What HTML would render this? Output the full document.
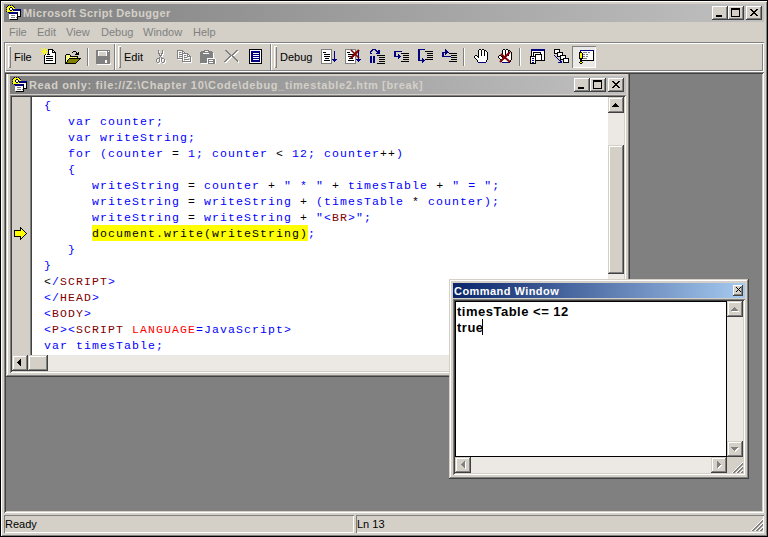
<!DOCTYPE html><html><head><meta charset="utf-8"><style>html,body{margin:0;padding:0;}body{width:768px;height:537px;position:relative;overflow:hidden;background:#000;font-family:"Liberation Sans",sans-serif;}svg{display:block}.mono{font-family:"Liberation Mono",monospace;font-size:11.5px;letter-spacing:1.1px;line-height:16px;}</style></head><body><div style="position:absolute;left:1px;top:1px;width:766px;height:535px;background:#d4d0c8;box-shadow: inset 1px 1px 0 #fff, inset -1px -1px 0 #808080;"></div><div style="position:absolute;left:4px;top:4px;width:760px;height:18px;background:linear-gradient(to right,#808080,#c0c0c0);"></div><svg style="position:absolute;left:5px;top:5px" width="16" height="16" shape-rendering="crispEdges"><rect x="3" y="0" width="1" height="1" fill="#000000"/><rect x="5" y="0" width="1" height="1" fill="#000000"/><rect x="7" y="0" width="1" height="1" fill="#000000"/><rect x="2" y="1" width="1" height="1" fill="#000000"/><rect x="3" y="1" width="5" height="1" fill="#ffff00"/><rect x="8" y="1" width="1" height="1" fill="#000000"/><rect x="1" y="2" width="1" height="1" fill="#000000"/><rect x="2" y="2" width="3" height="1" fill="#ffff00"/><rect x="5" y="2" width="2" height="1" fill="#000000"/><rect x="7" y="2" width="2" height="1" fill="#ffff00"/><rect x="9" y="2" width="1" height="1" fill="#000000"/><rect x="2" y="3" width="2" height="1" fill="#ffff00"/><rect x="4" y="3" width="1" height="1" fill="#000000"/><rect x="5" y="3" width="2" height="1" fill="#ffffff"/><rect x="7" y="3" width="1" height="1" fill="#000000"/><rect x="8" y="3" width="2" height="1" fill="#ffff00"/><rect x="1" y="4" width="1" height="1" fill="#000000"/><rect x="2" y="4" width="2" height="1" fill="#ffff00"/><rect x="4" y="4" width="1" height="1" fill="#000000"/><rect x="5" y="4" width="2" height="1" fill="#ffffff"/><rect x="7" y="4" width="1" height="1" fill="#000000"/><rect x="8" y="4" width="8" height="1" fill="#000080"/><rect x="2" y="5" width="3" height="1" fill="#ffff00"/><rect x="5" y="5" width="2" height="1" fill="#000000"/><rect x="7" y="5" width="1" height="1" fill="#ffff00"/><rect x="8" y="5" width="7" height="1" fill="#000080"/><rect x="15" y="5" width="1" height="1" fill="#000000"/><rect x="1" y="6" width="1" height="1" fill="#000000"/><rect x="2" y="6" width="6" height="1" fill="#ffff00"/><rect x="8" y="6" width="7" height="1" fill="#ffffff"/><rect x="15" y="6" width="1" height="1" fill="#000000"/><rect x="3" y="7" width="1" height="1" fill="#000000"/><rect x="4" y="7" width="8" height="1" fill="#000080"/><rect x="12" y="7" width="1" height="1" fill="#000000"/><rect x="13" y="7" width="2" height="1" fill="#ffffff"/><rect x="15" y="7" width="1" height="1" fill="#000000"/><rect x="4" y="8" width="8" height="1" fill="#000080"/><rect x="12" y="8" width="1" height="1" fill="#000000"/><rect x="13" y="8" width="2" height="1" fill="#ffffff"/><rect x="15" y="8" width="1" height="1" fill="#000000"/><rect x="4" y="9" width="8" height="1" fill="#ffffff"/><rect x="12" y="9" width="1" height="1" fill="#000000"/><rect x="13" y="9" width="2" height="1" fill="#ffffff"/><rect x="15" y="9" width="1" height="1" fill="#000000"/><rect x="4" y="10" width="2" height="1" fill="#ffffff"/><rect x="6" y="10" width="4" height="1" fill="#808080"/><rect x="10" y="10" width="2" height="1" fill="#ffffff"/><rect x="12" y="10" width="1" height="1" fill="#000000"/><rect x="13" y="10" width="2" height="1" fill="#ffffff"/><rect x="15" y="10" width="1" height="1" fill="#000000"/><rect x="4" y="11" width="8" height="1" fill="#ffffff"/><rect x="12" y="11" width="4" height="1" fill="#000000"/><rect x="4" y="12" width="2" height="1" fill="#ffffff"/><rect x="6" y="12" width="4" height="1" fill="#808080"/><rect x="10" y="12" width="1" height="1" fill="#ffffff"/><rect x="11" y="12" width="1" height="1" fill="#808080"/><rect x="12" y="12" width="1" height="1" fill="#000000"/><rect x="4" y="13" width="8" height="1" fill="#ffffff"/><rect x="12" y="13" width="1" height="1" fill="#000000"/><rect x="5" y="14" width="8" height="1" fill="#000000"/></svg><div style="position:absolute;left:23px;top:4px;white-space:pre;font-weight:bold;font-size:11px;line-height:18px;color:#d4d0c8;letter-spacing:0.38px;">Microsoft Script Debugger</div><div style="position:absolute;left:712px;top:6px;width:16px;height:14px;background:#d4d0c8;box-shadow: inset -1px -1px 0 #404040, inset 1px 1px 0 #ffffff, inset -2px -2px 0 #808080, inset 2px 2px 0 #d4d0c8;"></div><svg style="position:absolute;left:712px;top:6px" width="16" height="11" shape-rendering="crispEdges"><rect x="4" y="9" width="6" height="1" fill="#000000"/><rect x="4" y="10" width="6" height="1" fill="#000000"/></svg><div style="position:absolute;left:728px;top:6px;width:16px;height:14px;background:#d4d0c8;box-shadow: inset -1px -1px 0 #404040, inset 1px 1px 0 #ffffff, inset -2px -2px 0 #808080, inset 2px 2px 0 #d4d0c8;"></div><svg style="position:absolute;left:728px;top:6px" width="16" height="11" shape-rendering="crispEdges"><rect x="3" y="2" width="9" height="1" fill="#000000"/><rect x="3" y="3" width="9" height="1" fill="#000000"/><rect x="3" y="4" width="1" height="1" fill="#000000"/><rect x="11" y="4" width="1" height="1" fill="#000000"/><rect x="3" y="5" width="1" height="1" fill="#000000"/><rect x="11" y="5" width="1" height="1" fill="#000000"/><rect x="3" y="6" width="1" height="1" fill="#000000"/><rect x="11" y="6" width="1" height="1" fill="#000000"/><rect x="3" y="7" width="1" height="1" fill="#000000"/><rect x="11" y="7" width="1" height="1" fill="#000000"/><rect x="3" y="8" width="1" height="1" fill="#000000"/><rect x="11" y="8" width="1" height="1" fill="#000000"/><rect x="3" y="9" width="1" height="1" fill="#000000"/><rect x="11" y="9" width="1" height="1" fill="#000000"/><rect x="3" y="10" width="9" height="1" fill="#000000"/></svg><div style="position:absolute;left:746px;top:6px;width:16px;height:14px;background:#d4d0c8;box-shadow: inset -1px -1px 0 #404040, inset 1px 1px 0 #ffffff, inset -2px -2px 0 #808080, inset 2px 2px 0 #d4d0c8;"></div><svg style="position:absolute;left:746px;top:6px" width="16" height="10" shape-rendering="crispEdges"><rect x="4" y="3" width="2" height="1" fill="#000000"/><rect x="10" y="3" width="2" height="1" fill="#000000"/><rect x="5" y="4" width="2" height="1" fill="#000000"/><rect x="9" y="4" width="2" height="1" fill="#000000"/><rect x="6" y="5" width="4" height="1" fill="#000000"/><rect x="7" y="6" width="2" height="1" fill="#000000"/><rect x="6" y="7" width="4" height="1" fill="#000000"/><rect x="5" y="8" width="2" height="1" fill="#000000"/><rect x="9" y="8" width="2" height="1" fill="#000000"/><rect x="4" y="9" width="2" height="1" fill="#000000"/><rect x="10" y="9" width="2" height="1" fill="#000000"/></svg><div style="position:absolute;left:9px;top:24px;white-space:pre;font-size:11px;line-height:17px;color:#808080;">File</div><div style="position:absolute;left:37px;top:24px;white-space:pre;font-size:11px;line-height:17px;color:#808080;">Edit</div><div style="position:absolute;left:66px;top:24px;white-space:pre;font-size:11px;line-height:17px;color:#808080;">View</div><div style="position:absolute;left:101px;top:24px;white-space:pre;font-size:11px;line-height:17px;color:#808080;">Debug</div><div style="position:absolute;left:143px;top:24px;white-space:pre;font-size:11px;line-height:17px;color:#808080;">Window</div><div style="position:absolute;left:193px;top:24px;white-space:pre;font-size:11px;line-height:17px;color:#808080;">Help</div><div style="position:absolute;left:4px;top:42px;width:760px;height:30px;box-shadow: inset 1px 1px 0 #808080, inset -1px -1px 0 #ffffff;"></div><div style="position:absolute;left:5px;top:43px;width:758px;height:28px;box-shadow: inset 1px 1px 0 #ffffff, inset -1px -1px 0 #808080;"></div><div style="position:absolute;left:114px;top:44px;width:1px;height:27px;background:#808080;"></div><div style="position:absolute;left:115px;top:44px;width:1px;height:26px;background:#fff;"></div><div style="position:absolute;left:270px;top:44px;width:1px;height:27px;background:#808080;"></div><div style="position:absolute;left:271px;top:44px;width:1px;height:26px;background:#fff;"></div><div style="position:absolute;left:8px;top:46px;width:3px;height:22px;box-shadow: inset 1px 1px 0 #fff, inset -1px -1px 0 #808080;"></div><div style="position:absolute;left:118px;top:46px;width:3px;height:22px;box-shadow: inset 1px 1px 0 #fff, inset -1px -1px 0 #808080;"></div><div style="position:absolute;left:274px;top:46px;width:3px;height:22px;box-shadow: inset 1px 1px 0 #fff, inset -1px -1px 0 #808080;"></div><div style="position:absolute;left:14px;top:46px;white-space:pre;font-size:11px;line-height:22px;color:#000;">File</div><div style="position:absolute;left:124px;top:46px;white-space:pre;font-size:11px;line-height:22px;color:#000;">Edit</div><div style="position:absolute;left:280px;top:46px;white-space:pre;font-size:11px;line-height:22px;color:#000;">Debug</div><div style="position:absolute;left:87px;top:48px;width:1px;height:18px;background:#808080;"></div><div style="position:absolute;left:88px;top:48px;width:1px;height:18px;background:#fff;"></div><div style="position:absolute;left:463px;top:48px;width:1px;height:18px;background:#808080;"></div><div style="position:absolute;left:464px;top:48px;width:1px;height:18px;background:#fff;"></div><div style="position:absolute;left:519px;top:48px;width:1px;height:18px;background:#808080;"></div><div style="position:absolute;left:520px;top:48px;width:1px;height:18px;background:#fff;"></div><svg style="position:absolute;left:41px;top:48px" width="16" height="16" shape-rendering="crispEdges"><rect x="0" y="0" width="1" height="1" fill="#ffff00"/><rect x="3" y="0" width="1" height="1" fill="#ffff00"/><rect x="1" y="1" width="1" height="1" fill="#ffff00"/><rect x="3" y="1" width="1" height="1" fill="#ffff00"/><rect x="5" y="1" width="1" height="1" fill="#ffff00"/><rect x="7" y="1" width="5" height="1" fill="#000000"/><rect x="2" y="2" width="3" height="1" fill="#ffff00"/><rect x="7" y="2" width="1" height="1" fill="#000000"/><rect x="8" y="2" width="3" height="1" fill="#ffffff"/><rect x="11" y="2" width="2" height="1" fill="#000000"/><rect x="0" y="3" width="3" height="1" fill="#ffff00"/><rect x="4" y="3" width="3" height="1" fill="#ffff00"/><rect x="7" y="3" width="1" height="1" fill="#000000"/><rect x="8" y="3" width="3" height="1" fill="#ffffff"/><rect x="11" y="3" width="1" height="1" fill="#000000"/><rect x="12" y="3" width="1" height="1" fill="#ffffff"/><rect x="13" y="3" width="1" height="1" fill="#000000"/><rect x="2" y="4" width="3" height="1" fill="#ffff00"/><rect x="7" y="4" width="1" height="1" fill="#000000"/><rect x="8" y="4" width="3" height="1" fill="#ffffff"/><rect x="11" y="4" width="4" height="1" fill="#000000"/><rect x="1" y="5" width="1" height="1" fill="#ffff00"/><rect x="3" y="5" width="1" height="1" fill="#ffff00"/><rect x="5" y="5" width="1" height="1" fill="#ffff00"/><rect x="7" y="5" width="1" height="1" fill="#000000"/><rect x="8" y="5" width="6" height="1" fill="#ffffff"/><rect x="14" y="5" width="1" height="1" fill="#000000"/><rect x="0" y="6" width="1" height="1" fill="#ffff00"/><rect x="3" y="6" width="1" height="1" fill="#ffff00"/><rect x="4" y="6" width="1" height="1" fill="#000000"/><rect x="5" y="6" width="1" height="1" fill="#ffffff"/><rect x="6" y="6" width="3" height="1" fill="#000000"/><rect x="9" y="6" width="5" height="1" fill="#ffffff"/><rect x="14" y="6" width="1" height="1" fill="#000000"/><rect x="3" y="7" width="1" height="1" fill="#000000"/><rect x="4" y="7" width="10" height="1" fill="#ffffff"/><rect x="14" y="7" width="1" height="1" fill="#000000"/><rect x="3" y="8" width="1" height="1" fill="#000000"/><rect x="4" y="8" width="1" height="1" fill="#ffffff"/><rect x="5" y="8" width="7" height="1" fill="#000000"/><rect x="12" y="8" width="2" height="1" fill="#ffffff"/><rect x="14" y="8" width="1" height="1" fill="#000000"/><rect x="3" y="9" width="1" height="1" fill="#000000"/><rect x="4" y="9" width="10" height="1" fill="#ffffff"/><rect x="14" y="9" width="1" height="1" fill="#000000"/><rect x="3" y="10" width="1" height="1" fill="#000000"/><rect x="4" y="10" width="1" height="1" fill="#ffffff"/><rect x="5" y="10" width="7" height="1" fill="#000000"/><rect x="12" y="10" width="2" height="1" fill="#ffffff"/><rect x="14" y="10" width="1" height="1" fill="#000000"/><rect x="3" y="11" width="1" height="1" fill="#000000"/><rect x="4" y="11" width="10" height="1" fill="#ffffff"/><rect x="14" y="11" width="1" height="1" fill="#000000"/><rect x="3" y="12" width="1" height="1" fill="#000000"/><rect x="4" y="12" width="1" height="1" fill="#ffffff"/><rect x="5" y="12" width="7" height="1" fill="#000000"/><rect x="12" y="12" width="2" height="1" fill="#ffffff"/><rect x="14" y="12" width="1" height="1" fill="#000000"/><rect x="3" y="13" width="1" height="1" fill="#000000"/><rect x="4" y="13" width="10" height="1" fill="#ffffff"/><rect x="14" y="13" width="1" height="1" fill="#000000"/><rect x="3" y="14" width="1" height="1" fill="#000000"/><rect x="4" y="14" width="10" height="1" fill="#ffffff"/><rect x="14" y="14" width="1" height="1" fill="#000000"/><rect x="3" y="15" width="12" height="1" fill="#000000"/></svg><svg style="position:absolute;left:65px;top:48px" width="16" height="16" shape-rendering="crispEdges"><rect x="8" y="3" width="3" height="1" fill="#000000"/><rect x="7" y="4" width="1" height="1" fill="#000000"/><rect x="11" y="4" width="1" height="1" fill="#000000"/><rect x="13" y="4" width="1" height="1" fill="#000000"/><rect x="11" y="5" width="3" height="1" fill="#000000"/><rect x="1" y="6" width="4" height="1" fill="#000000"/><rect x="10" y="6" width="4" height="1" fill="#000000"/><rect x="0" y="7" width="1" height="1" fill="#000000"/><rect x="1" y="7" width="1" height="1" fill="#ffff00"/><rect x="2" y="7" width="1" height="1" fill="#ffffff"/><rect x="3" y="7" width="1" height="1" fill="#ffff00"/><rect x="4" y="7" width="1" height="1" fill="#ffffff"/><rect x="5" y="7" width="1" height="1" fill="#000000"/><rect x="0" y="8" width="1" height="1" fill="#000000"/><rect x="1" y="8" width="1" height="1" fill="#ffffff"/><rect x="2" y="8" width="1" height="1" fill="#ffff00"/><rect x="3" y="8" width="1" height="1" fill="#ffffff"/><rect x="4" y="8" width="1" height="1" fill="#ffff00"/><rect x="5" y="8" width="8" height="1" fill="#000000"/><rect x="0" y="9" width="1" height="1" fill="#000000"/><rect x="1" y="9" width="1" height="1" fill="#ffff00"/><rect x="2" y="9" width="1" height="1" fill="#ffffff"/><rect x="3" y="9" width="1" height="1" fill="#ffff00"/><rect x="4" y="9" width="1" height="1" fill="#ffffff"/><rect x="5" y="9" width="1" height="1" fill="#ffff00"/><rect x="6" y="9" width="1" height="1" fill="#ffffff"/><rect x="7" y="9" width="1" height="1" fill="#ffff00"/><rect x="8" y="9" width="1" height="1" fill="#ffffff"/><rect x="9" y="9" width="1" height="1" fill="#ffff00"/><rect x="10" y="9" width="1" height="1" fill="#ffffff"/><rect x="11" y="9" width="1" height="1" fill="#ffff00"/><rect x="12" y="9" width="1" height="1" fill="#000000"/><rect x="0" y="10" width="1" height="1" fill="#000000"/><rect x="1" y="10" width="1" height="1" fill="#ffffff"/><rect x="2" y="10" width="1" height="1" fill="#ffff00"/><rect x="3" y="10" width="1" height="1" fill="#ffffff"/><rect x="4" y="10" width="12" height="1" fill="#000000"/><rect x="0" y="11" width="1" height="1" fill="#000000"/><rect x="1" y="11" width="1" height="1" fill="#ffff00"/><rect x="2" y="11" width="1" height="1" fill="#ffffff"/><rect x="3" y="11" width="1" height="1" fill="#000000"/><rect x="4" y="11" width="10" height="1" fill="#808000"/><rect x="14" y="11" width="1" height="1" fill="#000000"/><rect x="0" y="12" width="1" height="1" fill="#000000"/><rect x="1" y="12" width="1" height="1" fill="#ffffff"/><rect x="2" y="12" width="1" height="1" fill="#000000"/><rect x="3" y="12" width="10" height="1" fill="#808000"/><rect x="13" y="12" width="1" height="1" fill="#000000"/><rect x="0" y="13" width="1" height="1" fill="#000000"/><rect x="1" y="13" width="1" height="1" fill="#ffff00"/><rect x="2" y="13" width="1" height="1" fill="#000000"/><rect x="3" y="13" width="9" height="1" fill="#808000"/><rect x="12" y="13" width="1" height="1" fill="#000000"/><rect x="0" y="14" width="2" height="1" fill="#000000"/><rect x="2" y="14" width="9" height="1" fill="#808000"/><rect x="11" y="14" width="1" height="1" fill="#000000"/><rect x="0" y="15" width="11" height="1" fill="#000000"/></svg><svg style="position:absolute;left:95px;top:49px" width="16" height="16" shape-rendering="crispEdges"><rect x="1" y="1" width="14" height="1" fill="#808080"/><rect x="1" y="2" width="2" height="1" fill="#808080"/><rect x="3" y="2" width="9" height="1" fill="#ffffff"/><rect x="12" y="2" width="1" height="1" fill="#808080"/><rect x="13" y="2" width="1" height="1" fill="#ffffff"/><rect x="14" y="2" width="1" height="1" fill="#808080"/><rect x="1" y="3" width="2" height="1" fill="#808080"/><rect x="3" y="3" width="1" height="1" fill="#ffffff"/><rect x="11" y="3" width="1" height="1" fill="#ffffff"/><rect x="12" y="3" width="3" height="1" fill="#808080"/><rect x="1" y="4" width="2" height="1" fill="#808080"/><rect x="3" y="4" width="1" height="1" fill="#ffffff"/><rect x="11" y="4" width="1" height="1" fill="#ffffff"/><rect x="12" y="4" width="3" height="1" fill="#808080"/><rect x="1" y="5" width="2" height="1" fill="#808080"/><rect x="3" y="5" width="1" height="1" fill="#ffffff"/><rect x="11" y="5" width="1" height="1" fill="#ffffff"/><rect x="12" y="5" width="3" height="1" fill="#808080"/><rect x="1" y="6" width="2" height="1" fill="#808080"/><rect x="3" y="6" width="1" height="1" fill="#ffffff"/><rect x="11" y="6" width="1" height="1" fill="#ffffff"/><rect x="12" y="6" width="3" height="1" fill="#808080"/><rect x="1" y="7" width="14" height="1" fill="#808080"/><rect x="1" y="8" width="14" height="1" fill="#808080"/><rect x="1" y="9" width="14" height="1" fill="#808080"/><rect x="1" y="10" width="14" height="1" fill="#808080"/><rect x="1" y="11" width="9" height="1" fill="#808080"/><rect x="10" y="11" width="2" height="1" fill="#ffffff"/><rect x="12" y="11" width="3" height="1" fill="#808080"/><rect x="1" y="12" width="9" height="1" fill="#808080"/><rect x="10" y="12" width="2" height="1" fill="#ffffff"/><rect x="12" y="12" width="3" height="1" fill="#808080"/><rect x="1" y="13" width="9" height="1" fill="#808080"/><rect x="10" y="13" width="2" height="1" fill="#ffffff"/><rect x="12" y="13" width="3" height="1" fill="#808080"/><rect x="1" y="14" width="14" height="1" fill="#808080"/><rect x="15" y="14" width="1" height="1" fill="#ffffff"/><rect x="2" y="15" width="14" height="1" fill="#ffffff"/></svg><svg style="position:absolute;left:154px;top:48px" width="17" height="16" shape-rendering="crispEdges"><rect x="4" y="2" width="1" height="1" fill="#808080"/><rect x="8" y="2" width="1" height="1" fill="#808080"/><rect x="4" y="3" width="1" height="1" fill="#808080"/><rect x="5" y="3" width="1" height="1" fill="#ffffff"/><rect x="8" y="3" width="1" height="1" fill="#808080"/><rect x="9" y="3" width="1" height="1" fill="#ffffff"/><rect x="4" y="4" width="1" height="1" fill="#808080"/><rect x="5" y="4" width="1" height="1" fill="#ffffff"/><rect x="8" y="4" width="1" height="1" fill="#808080"/><rect x="9" y="4" width="1" height="1" fill="#ffffff"/><rect x="4" y="5" width="2" height="1" fill="#808080"/><rect x="7" y="5" width="2" height="1" fill="#808080"/><rect x="9" y="5" width="1" height="1" fill="#ffffff"/><rect x="5" y="6" width="1" height="1" fill="#808080"/><rect x="6" y="6" width="1" height="1" fill="#ffffff"/><rect x="7" y="6" width="1" height="1" fill="#808080"/><rect x="8" y="6" width="2" height="1" fill="#ffffff"/><rect x="5" y="7" width="3" height="1" fill="#808080"/><rect x="8" y="7" width="1" height="1" fill="#ffffff"/><rect x="6" y="8" width="1" height="1" fill="#808080"/><rect x="7" y="8" width="2" height="1" fill="#ffffff"/><rect x="5" y="9" width="1" height="1" fill="#808080"/><rect x="7" y="9" width="1" height="1" fill="#808080"/><rect x="3" y="10" width="3" height="1" fill="#808080"/><rect x="6" y="10" width="1" height="1" fill="#ffffff"/><rect x="7" y="10" width="3" height="1" fill="#808080"/><rect x="2" y="11" width="1" height="1" fill="#808080"/><rect x="4" y="11" width="1" height="1" fill="#ffffff"/><rect x="5" y="11" width="1" height="1" fill="#808080"/><rect x="6" y="11" width="1" height="1" fill="#ffffff"/><rect x="7" y="11" width="1" height="1" fill="#808080"/><rect x="8" y="11" width="2" height="1" fill="#ffffff"/><rect x="10" y="11" width="1" height="1" fill="#808080"/><rect x="2" y="12" width="1" height="1" fill="#808080"/><rect x="3" y="12" width="1" height="1" fill="#ffffff"/><rect x="5" y="12" width="1" height="1" fill="#808080"/><rect x="6" y="12" width="1" height="1" fill="#ffffff"/><rect x="7" y="12" width="1" height="1" fill="#808080"/><rect x="8" y="12" width="1" height="1" fill="#ffffff"/><rect x="10" y="12" width="1" height="1" fill="#808080"/><rect x="11" y="12" width="1" height="1" fill="#ffffff"/><rect x="2" y="13" width="1" height="1" fill="#808080"/><rect x="3" y="13" width="1" height="1" fill="#ffffff"/><rect x="5" y="13" width="1" height="1" fill="#808080"/><rect x="6" y="13" width="1" height="1" fill="#ffffff"/><rect x="7" y="13" width="1" height="1" fill="#808080"/><rect x="8" y="13" width="1" height="1" fill="#ffffff"/><rect x="10" y="13" width="1" height="1" fill="#808080"/><rect x="11" y="13" width="1" height="1" fill="#ffffff"/><rect x="3" y="14" width="2" height="1" fill="#808080"/><rect x="6" y="14" width="1" height="1" fill="#ffffff"/><rect x="8" y="14" width="2" height="1" fill="#808080"/><rect x="11" y="14" width="1" height="1" fill="#ffffff"/><rect x="4" y="15" width="2" height="1" fill="#ffffff"/><rect x="9" y="15" width="2" height="1" fill="#ffffff"/></svg><svg style="position:absolute;left:177px;top:48px" width="17" height="15" shape-rendering="crispEdges"><rect x="0" y="2" width="6" height="1" fill="#808080"/><rect x="0" y="3" width="1" height="1" fill="#808080"/><rect x="1" y="3" width="4" height="1" fill="#ffffff"/><rect x="5" y="3" width="2" height="1" fill="#808080"/><rect x="0" y="4" width="1" height="1" fill="#808080"/><rect x="1" y="4" width="1" height="1" fill="#ffffff"/><rect x="2" y="4" width="2" height="1" fill="#808080"/><rect x="5" y="4" width="1" height="1" fill="#808080"/><rect x="6" y="4" width="1" height="1" fill="#ffffff"/><rect x="7" y="4" width="1" height="1" fill="#808080"/><rect x="0" y="5" width="1" height="1" fill="#808080"/><rect x="1" y="5" width="1" height="1" fill="#ffffff"/><rect x="3" y="5" width="2" height="1" fill="#ffffff"/><rect x="5" y="5" width="6" height="1" fill="#808080"/><rect x="0" y="6" width="1" height="1" fill="#808080"/><rect x="1" y="6" width="1" height="1" fill="#ffffff"/><rect x="2" y="6" width="4" height="1" fill="#808080"/><rect x="6" y="6" width="4" height="1" fill="#ffffff"/><rect x="10" y="6" width="2" height="1" fill="#808080"/><rect x="0" y="7" width="1" height="1" fill="#808080"/><rect x="1" y="7" width="1" height="1" fill="#ffffff"/><rect x="3" y="7" width="2" height="1" fill="#ffffff"/><rect x="5" y="7" width="1" height="1" fill="#808080"/><rect x="6" y="7" width="1" height="1" fill="#ffffff"/><rect x="7" y="7" width="2" height="1" fill="#808080"/><rect x="10" y="7" width="1" height="1" fill="#808080"/><rect x="11" y="7" width="1" height="1" fill="#ffffff"/><rect x="12" y="7" width="1" height="1" fill="#808080"/><rect x="0" y="8" width="1" height="1" fill="#808080"/><rect x="1" y="8" width="1" height="1" fill="#ffffff"/><rect x="2" y="8" width="4" height="1" fill="#808080"/><rect x="6" y="8" width="1" height="1" fill="#ffffff"/><rect x="8" y="8" width="2" height="1" fill="#ffffff"/><rect x="10" y="8" width="4" height="1" fill="#808080"/><rect x="0" y="9" width="1" height="1" fill="#808080"/><rect x="1" y="9" width="1" height="1" fill="#ffffff"/><rect x="3" y="9" width="2" height="1" fill="#ffffff"/><rect x="5" y="9" width="1" height="1" fill="#808080"/><rect x="6" y="9" width="1" height="1" fill="#ffffff"/><rect x="7" y="9" width="3" height="1" fill="#808080"/><rect x="11" y="9" width="2" height="1" fill="#ffffff"/><rect x="13" y="9" width="1" height="1" fill="#808080"/><rect x="14" y="9" width="1" height="1" fill="#ffffff"/><rect x="0" y="10" width="6" height="1" fill="#808080"/><rect x="6" y="10" width="1" height="1" fill="#ffffff"/><rect x="8" y="10" width="3" height="1" fill="#ffffff"/><rect x="13" y="10" width="1" height="1" fill="#808080"/><rect x="14" y="10" width="1" height="1" fill="#ffffff"/><rect x="1" y="11" width="4" height="1" fill="#ffffff"/><rect x="5" y="11" width="1" height="1" fill="#808080"/><rect x="6" y="11" width="1" height="1" fill="#ffffff"/><rect x="7" y="11" width="5" height="1" fill="#808080"/><rect x="13" y="11" width="1" height="1" fill="#808080"/><rect x="14" y="11" width="1" height="1" fill="#ffffff"/><rect x="5" y="12" width="1" height="1" fill="#808080"/><rect x="6" y="12" width="1" height="1" fill="#ffffff"/><rect x="8" y="12" width="5" height="1" fill="#ffffff"/><rect x="13" y="12" width="1" height="1" fill="#808080"/><rect x="14" y="12" width="1" height="1" fill="#ffffff"/><rect x="5" y="13" width="9" height="1" fill="#808080"/><rect x="14" y="13" width="1" height="1" fill="#ffffff"/><rect x="6" y="14" width="9" height="1" fill="#ffffff"/></svg><svg style="position:absolute;left:200px;top:48px" width="16" height="16" shape-rendering="crispEdges"><rect x="4" y="2" width="5" height="1" fill="#808080"/><rect x="1" y="3" width="4" height="1" fill="#808080"/><rect x="5" y="3" width="3" height="1" fill="#ffffff"/><rect x="8" y="3" width="4" height="1" fill="#808080"/><rect x="0" y="4" width="13" height="1" fill="#808080"/><rect x="0" y="5" width="3" height="1" fill="#808080"/><rect x="3" y="5" width="6" height="1" fill="#ffffff"/><rect x="9" y="5" width="4" height="1" fill="#808080"/><rect x="13" y="5" width="1" height="1" fill="#ffffff"/><rect x="0" y="6" width="13" height="1" fill="#808080"/><rect x="13" y="6" width="1" height="1" fill="#ffffff"/><rect x="0" y="7" width="13" height="1" fill="#808080"/><rect x="13" y="7" width="1" height="1" fill="#ffffff"/><rect x="0" y="8" width="13" height="1" fill="#808080"/><rect x="13" y="8" width="1" height="1" fill="#ffffff"/><rect x="0" y="9" width="13" height="1" fill="#808080"/><rect x="13" y="9" width="1" height="1" fill="#ffffff"/><rect x="0" y="10" width="7" height="1" fill="#808080"/><rect x="7" y="10" width="8" height="1" fill="#ffffff"/><rect x="0" y="11" width="7" height="1" fill="#808080"/><rect x="7" y="11" width="1" height="1" fill="#ffffff"/><rect x="8" y="11" width="7" height="1" fill="#808080"/><rect x="15" y="11" width="1" height="1" fill="#ffffff"/><rect x="0" y="12" width="7" height="1" fill="#808080"/><rect x="7" y="12" width="1" height="1" fill="#ffffff"/><rect x="8" y="12" width="1" height="1" fill="#808080"/><rect x="9" y="12" width="4" height="1" fill="#ffffff"/><rect x="13" y="12" width="2" height="1" fill="#808080"/><rect x="15" y="12" width="1" height="1" fill="#ffffff"/><rect x="0" y="13" width="7" height="1" fill="#808080"/><rect x="7" y="13" width="1" height="1" fill="#ffffff"/><rect x="8" y="13" width="7" height="1" fill="#808080"/><rect x="15" y="13" width="1" height="1" fill="#ffffff"/><rect x="0" y="14" width="7" height="1" fill="#808080"/><rect x="7" y="14" width="1" height="1" fill="#ffffff"/><rect x="8" y="14" width="1" height="1" fill="#808080"/><rect x="9" y="14" width="4" height="1" fill="#ffffff"/><rect x="13" y="14" width="2" height="1" fill="#808080"/><rect x="15" y="14" width="1" height="1" fill="#ffffff"/><rect x="1" y="15" width="7" height="1" fill="#ffffff"/><rect x="8" y="15" width="7" height="1" fill="#808080"/><rect x="15" y="15" width="1" height="1" fill="#ffffff"/></svg><svg style="position:absolute;left:224px;top:48px" width="17" height="15" shape-rendering="crispEdges"><rect x="1" y="2" width="2" height="1" fill="#808080"/><rect x="12" y="2" width="2" height="1" fill="#808080"/><rect x="2" y="3" width="2" height="1" fill="#808080"/><rect x="11" y="3" width="2" height="1" fill="#808080"/><rect x="13" y="3" width="2" height="1" fill="#ffffff"/><rect x="3" y="4" width="2" height="1" fill="#808080"/><rect x="10" y="4" width="2" height="1" fill="#808080"/><rect x="12" y="4" width="2" height="1" fill="#ffffff"/><rect x="4" y="5" width="2" height="1" fill="#808080"/><rect x="9" y="5" width="2" height="1" fill="#808080"/><rect x="11" y="5" width="2" height="1" fill="#ffffff"/><rect x="5" y="6" width="2" height="1" fill="#808080"/><rect x="8" y="6" width="2" height="1" fill="#808080"/><rect x="10" y="6" width="2" height="1" fill="#ffffff"/><rect x="6" y="7" width="3" height="1" fill="#808080"/><rect x="9" y="7" width="2" height="1" fill="#ffffff"/><rect x="5" y="8" width="2" height="1" fill="#808080"/><rect x="7" y="8" width="1" height="1" fill="#ffffff"/><rect x="8" y="8" width="2" height="1" fill="#808080"/><rect x="4" y="9" width="2" height="1" fill="#808080"/><rect x="6" y="9" width="2" height="1" fill="#ffffff"/><rect x="9" y="9" width="2" height="1" fill="#808080"/><rect x="3" y="10" width="2" height="1" fill="#808080"/><rect x="5" y="10" width="2" height="1" fill="#ffffff"/><rect x="10" y="10" width="2" height="1" fill="#808080"/><rect x="2" y="11" width="2" height="1" fill="#808080"/><rect x="4" y="11" width="2" height="1" fill="#ffffff"/><rect x="11" y="11" width="2" height="1" fill="#808080"/><rect x="1" y="12" width="2" height="1" fill="#808080"/><rect x="3" y="12" width="2" height="1" fill="#ffffff"/><rect x="12" y="12" width="2" height="1" fill="#808080"/><rect x="0" y="13" width="2" height="1" fill="#808080"/><rect x="2" y="13" width="2" height="1" fill="#ffffff"/><rect x="13" y="13" width="1" height="1" fill="#808080"/><rect x="14" y="13" width="1" height="1" fill="#ffffff"/><rect x="1" y="14" width="2" height="1" fill="#ffffff"/><rect x="14" y="14" width="1" height="1" fill="#ffffff"/></svg><svg style="position:absolute;left:248px;top:48px" width="16" height="16" shape-rendering="crispEdges"><rect x="1" y="1" width="13" height="1" fill="#000000"/><rect x="1" y="2" width="1" height="1" fill="#000000"/><rect x="2" y="2" width="11" height="1" fill="#ffffff"/><rect x="13" y="2" width="1" height="1" fill="#000000"/><rect x="1" y="3" width="1" height="1" fill="#000000"/><rect x="2" y="3" width="1" height="1" fill="#ffffff"/><rect x="3" y="3" width="9" height="1" fill="#000080"/><rect x="12" y="3" width="1" height="1" fill="#ffffff"/><rect x="13" y="3" width="1" height="1" fill="#000000"/><rect x="1" y="4" width="1" height="1" fill="#000000"/><rect x="2" y="4" width="1" height="1" fill="#ffffff"/><rect x="3" y="4" width="9" height="1" fill="#000080"/><rect x="12" y="4" width="1" height="1" fill="#ffffff"/><rect x="13" y="4" width="1" height="1" fill="#000000"/><rect x="1" y="5" width="1" height="1" fill="#000000"/><rect x="2" y="5" width="1" height="1" fill="#ffffff"/><rect x="3" y="5" width="2" height="1" fill="#000080"/><rect x="5" y="5" width="6" height="1" fill="#ffffff"/><rect x="11" y="5" width="1" height="1" fill="#000080"/><rect x="12" y="5" width="1" height="1" fill="#ffffff"/><rect x="13" y="5" width="1" height="1" fill="#000000"/><rect x="1" y="6" width="1" height="1" fill="#000000"/><rect x="2" y="6" width="1" height="1" fill="#ffffff"/><rect x="3" y="6" width="9" height="1" fill="#000080"/><rect x="12" y="6" width="1" height="1" fill="#ffffff"/><rect x="13" y="6" width="1" height="1" fill="#000000"/><rect x="1" y="7" width="1" height="1" fill="#000000"/><rect x="2" y="7" width="1" height="1" fill="#ffffff"/><rect x="3" y="7" width="2" height="1" fill="#000080"/><rect x="5" y="7" width="6" height="1" fill="#ffffff"/><rect x="11" y="7" width="1" height="1" fill="#000080"/><rect x="12" y="7" width="1" height="1" fill="#ffffff"/><rect x="13" y="7" width="1" height="1" fill="#000000"/><rect x="1" y="8" width="1" height="1" fill="#000000"/><rect x="2" y="8" width="1" height="1" fill="#ffffff"/><rect x="3" y="8" width="9" height="1" fill="#000080"/><rect x="12" y="8" width="1" height="1" fill="#ffffff"/><rect x="13" y="8" width="1" height="1" fill="#000000"/><rect x="1" y="9" width="1" height="1" fill="#000000"/><rect x="2" y="9" width="1" height="1" fill="#ffffff"/><rect x="3" y="9" width="2" height="1" fill="#000080"/><rect x="5" y="9" width="6" height="1" fill="#ffffff"/><rect x="11" y="9" width="1" height="1" fill="#000080"/><rect x="12" y="9" width="1" height="1" fill="#ffffff"/><rect x="13" y="9" width="1" height="1" fill="#000000"/><rect x="1" y="10" width="1" height="1" fill="#000000"/><rect x="2" y="10" width="1" height="1" fill="#ffffff"/><rect x="3" y="10" width="9" height="1" fill="#000080"/><rect x="12" y="10" width="1" height="1" fill="#ffffff"/><rect x="13" y="10" width="1" height="1" fill="#000000"/><rect x="1" y="11" width="1" height="1" fill="#000000"/><rect x="2" y="11" width="1" height="1" fill="#ffffff"/><rect x="3" y="11" width="2" height="1" fill="#000080"/><rect x="5" y="11" width="6" height="1" fill="#ffffff"/><rect x="11" y="11" width="1" height="1" fill="#000080"/><rect x="12" y="11" width="1" height="1" fill="#ffffff"/><rect x="13" y="11" width="1" height="1" fill="#000000"/><rect x="1" y="12" width="1" height="1" fill="#000000"/><rect x="2" y="12" width="1" height="1" fill="#ffffff"/><rect x="3" y="12" width="9" height="1" fill="#000080"/><rect x="12" y="12" width="1" height="1" fill="#ffffff"/><rect x="13" y="12" width="1" height="1" fill="#000000"/><rect x="1" y="13" width="1" height="1" fill="#000000"/><rect x="2" y="13" width="1" height="1" fill="#ffffff"/><rect x="3" y="13" width="9" height="1" fill="#000080"/><rect x="12" y="13" width="1" height="1" fill="#ffffff"/><rect x="13" y="13" width="1" height="1" fill="#000000"/><rect x="1" y="14" width="1" height="1" fill="#000000"/><rect x="2" y="14" width="11" height="1" fill="#ffffff"/><rect x="13" y="14" width="1" height="1" fill="#000000"/><rect x="1" y="15" width="13" height="1" fill="#000000"/></svg><svg style="position:absolute;left:321px;top:48px" width="16" height="16" shape-rendering="crispEdges"><rect x="0" y="1" width="11" height="1" fill="#808080"/><rect x="0" y="2" width="1" height="1" fill="#808080"/><rect x="1" y="2" width="9" height="1" fill="#ffffff"/><rect x="10" y="2" width="1" height="1" fill="#808080"/><rect x="0" y="3" width="1" height="1" fill="#808080"/><rect x="1" y="3" width="9" height="1" fill="#ffffff"/><rect x="10" y="3" width="1" height="1" fill="#808080"/><rect x="13" y="3" width="1" height="1" fill="#000080"/><rect x="0" y="4" width="1" height="1" fill="#808080"/><rect x="1" y="4" width="1" height="1" fill="#ffffff"/><rect x="2" y="4" width="3" height="1" fill="#000000"/><rect x="5" y="4" width="5" height="1" fill="#ffffff"/><rect x="10" y="4" width="1" height="1" fill="#808080"/><rect x="13" y="4" width="1" height="1" fill="#000080"/><rect x="0" y="5" width="1" height="1" fill="#808080"/><rect x="1" y="5" width="9" height="1" fill="#ffffff"/><rect x="10" y="5" width="1" height="1" fill="#808080"/><rect x="13" y="5" width="1" height="1" fill="#000080"/><rect x="0" y="6" width="1" height="1" fill="#808080"/><rect x="1" y="6" width="2" height="1" fill="#ffffff"/><rect x="3" y="6" width="6" height="1" fill="#000000"/><rect x="9" y="6" width="1" height="1" fill="#ffffff"/><rect x="10" y="6" width="1" height="1" fill="#808080"/><rect x="13" y="6" width="1" height="1" fill="#000080"/><rect x="0" y="7" width="1" height="1" fill="#808080"/><rect x="1" y="7" width="9" height="1" fill="#ffffff"/><rect x="10" y="7" width="1" height="1" fill="#808080"/><rect x="13" y="7" width="1" height="1" fill="#000080"/><rect x="0" y="8" width="1" height="1" fill="#808080"/><rect x="1" y="8" width="2" height="1" fill="#ffffff"/><rect x="3" y="8" width="6" height="1" fill="#000000"/><rect x="9" y="8" width="1" height="1" fill="#ffffff"/><rect x="10" y="8" width="1" height="1" fill="#808080"/><rect x="13" y="8" width="1" height="1" fill="#000080"/><rect x="0" y="9" width="1" height="1" fill="#808080"/><rect x="1" y="9" width="9" height="1" fill="#ffffff"/><rect x="10" y="9" width="1" height="1" fill="#808080"/><rect x="13" y="9" width="1" height="1" fill="#000080"/><rect x="0" y="10" width="1" height="1" fill="#808080"/><rect x="1" y="10" width="3" height="1" fill="#ffffff"/><rect x="4" y="10" width="4" height="1" fill="#000000"/><rect x="8" y="10" width="2" height="1" fill="#ffffff"/><rect x="10" y="10" width="1" height="1" fill="#808080"/><rect x="13" y="10" width="1" height="1" fill="#000080"/><rect x="0" y="11" width="1" height="1" fill="#808080"/><rect x="1" y="11" width="9" height="1" fill="#ffffff"/><rect x="10" y="11" width="1" height="1" fill="#808080"/><rect x="11" y="11" width="5" height="1" fill="#000080"/><rect x="0" y="12" width="1" height="1" fill="#808080"/><rect x="1" y="12" width="2" height="1" fill="#ffffff"/><rect x="3" y="12" width="6" height="1" fill="#000000"/><rect x="9" y="12" width="1" height="1" fill="#ffffff"/><rect x="10" y="12" width="1" height="1" fill="#808080"/><rect x="12" y="12" width="3" height="1" fill="#000080"/><rect x="0" y="13" width="1" height="1" fill="#808080"/><rect x="1" y="13" width="9" height="1" fill="#ffffff"/><rect x="10" y="13" width="1" height="1" fill="#808080"/><rect x="13" y="13" width="1" height="1" fill="#000080"/><rect x="0" y="14" width="1" height="1" fill="#808080"/><rect x="1" y="14" width="9" height="1" fill="#ffffff"/><rect x="10" y="14" width="1" height="1" fill="#808080"/><rect x="0" y="15" width="11" height="1" fill="#808080"/></svg><svg style="position:absolute;left:345px;top:48px" width="16" height="16" shape-rendering="crispEdges"><rect x="0" y="1" width="11" height="1" fill="#808080"/><rect x="0" y="2" width="1" height="1" fill="#808080"/><rect x="1" y="2" width="9" height="1" fill="#ffffff"/><rect x="10" y="2" width="1" height="1" fill="#808080"/><rect x="0" y="3" width="1" height="1" fill="#808080"/><rect x="1" y="3" width="9" height="1" fill="#ffffff"/><rect x="10" y="3" width="1" height="1" fill="#808080"/><rect x="13" y="3" width="1" height="1" fill="#000080"/><rect x="0" y="4" width="1" height="1" fill="#808080"/><rect x="1" y="4" width="1" height="1" fill="#ffffff"/><rect x="2" y="4" width="3" height="1" fill="#000000"/><rect x="5" y="4" width="5" height="1" fill="#ffffff"/><rect x="10" y="4" width="1" height="1" fill="#808080"/><rect x="13" y="4" width="1" height="1" fill="#000080"/><rect x="0" y="5" width="1" height="1" fill="#808080"/><rect x="1" y="5" width="9" height="1" fill="#ffffff"/><rect x="10" y="5" width="1" height="1" fill="#808080"/><rect x="13" y="5" width="1" height="1" fill="#000080"/><rect x="0" y="6" width="1" height="1" fill="#808080"/><rect x="1" y="6" width="2" height="1" fill="#ffffff"/><rect x="3" y="6" width="6" height="1" fill="#000000"/><rect x="9" y="6" width="1" height="1" fill="#ffffff"/><rect x="10" y="6" width="1" height="1" fill="#808080"/><rect x="13" y="6" width="1" height="1" fill="#000080"/><rect x="0" y="7" width="1" height="1" fill="#808080"/><rect x="1" y="7" width="9" height="1" fill="#ffffff"/><rect x="10" y="7" width="1" height="1" fill="#808080"/><rect x="13" y="7" width="1" height="1" fill="#000080"/><rect x="0" y="8" width="1" height="1" fill="#808080"/><rect x="1" y="8" width="2" height="1" fill="#ffffff"/><rect x="3" y="8" width="6" height="1" fill="#000000"/><rect x="9" y="8" width="1" height="1" fill="#ffffff"/><rect x="10" y="8" width="1" height="1" fill="#808080"/><rect x="13" y="8" width="1" height="1" fill="#000080"/><rect x="0" y="9" width="1" height="1" fill="#808080"/><rect x="1" y="9" width="9" height="1" fill="#ffffff"/><rect x="10" y="9" width="1" height="1" fill="#808080"/><rect x="13" y="9" width="1" height="1" fill="#000080"/><rect x="0" y="10" width="1" height="1" fill="#808080"/><rect x="1" y="10" width="3" height="1" fill="#ffffff"/><rect x="4" y="10" width="4" height="1" fill="#000000"/><rect x="8" y="10" width="2" height="1" fill="#ffffff"/><rect x="10" y="10" width="1" height="1" fill="#808080"/><rect x="13" y="10" width="1" height="1" fill="#000080"/><rect x="0" y="11" width="1" height="1" fill="#808080"/><rect x="1" y="11" width="9" height="1" fill="#ffffff"/><rect x="10" y="11" width="1" height="1" fill="#808080"/><rect x="11" y="11" width="5" height="1" fill="#000080"/><rect x="0" y="12" width="1" height="1" fill="#808080"/><rect x="1" y="12" width="2" height="1" fill="#ffffff"/><rect x="3" y="12" width="6" height="1" fill="#000000"/><rect x="9" y="12" width="1" height="1" fill="#ffffff"/><rect x="10" y="12" width="1" height="1" fill="#808080"/><rect x="12" y="12" width="3" height="1" fill="#000080"/><rect x="0" y="13" width="1" height="1" fill="#808080"/><rect x="1" y="13" width="9" height="1" fill="#ffffff"/><rect x="10" y="13" width="1" height="1" fill="#808080"/><rect x="13" y="13" width="1" height="1" fill="#000080"/><rect x="0" y="14" width="1" height="1" fill="#808080"/><rect x="1" y="14" width="9" height="1" fill="#ffffff"/><rect x="10" y="14" width="1" height="1" fill="#808080"/><rect x="0" y="15" width="11" height="1" fill="#808080"/><path d="M6 10 L14 2" stroke="#800000" stroke-width="2.2" shape-rendering="auto"/><path d="M6 2 L14 10" stroke="#800000" stroke-width="1.6" shape-rendering="auto"/></svg><svg style="position:absolute;left:369px;top:48px" width="16" height="16" shape-rendering="crispEdges"><rect x="3" y="1" width="4" height="1" fill="#000080"/><rect x="2" y="2" width="2" height="1" fill="#000080"/><rect x="6" y="2" width="2" height="1" fill="#000080"/><rect x="9" y="2" width="2" height="1" fill="#000080"/><rect x="1" y="3" width="2" height="1" fill="#000080"/><rect x="7" y="3" width="4" height="1" fill="#000080"/><rect x="1" y="4" width="1" height="1" fill="#000080"/><rect x="8" y="4" width="3" height="1" fill="#000080"/><rect x="1" y="5" width="2" height="1" fill="#000080"/><rect x="7" y="5" width="4" height="1" fill="#000080"/><rect x="8" y="7" width="8" height="1" fill="#000000"/><rect x="1" y="8" width="2" height="1" fill="#000080"/><rect x="4" y="8" width="2" height="1" fill="#000080"/><rect x="1" y="9" width="2" height="1" fill="#000080"/><rect x="4" y="9" width="2" height="1" fill="#000080"/><rect x="10" y="9" width="6" height="1" fill="#000000"/><rect x="1" y="10" width="2" height="1" fill="#000080"/><rect x="4" y="10" width="2" height="1" fill="#000080"/><rect x="1" y="11" width="2" height="1" fill="#000080"/><rect x="4" y="11" width="2" height="1" fill="#000080"/><rect x="10" y="11" width="6" height="1" fill="#000000"/><rect x="1" y="12" width="2" height="1" fill="#000080"/><rect x="4" y="12" width="2" height="1" fill="#000080"/><rect x="1" y="13" width="2" height="1" fill="#000080"/><rect x="4" y="13" width="2" height="1" fill="#000080"/><rect x="10" y="13" width="6" height="1" fill="#000000"/><rect x="1" y="14" width="2" height="1" fill="#000080"/><rect x="4" y="14" width="2" height="1" fill="#000080"/><rect x="8" y="15" width="8" height="1" fill="#000000"/></svg><svg style="position:absolute;left:393px;top:48px" width="16" height="16" shape-rendering="crispEdges"><rect x="1" y="3" width="8" height="1" fill="#000080"/><rect x="1" y="4" width="2" height="1" fill="#000080"/><rect x="1" y="5" width="2" height="1" fill="#000080"/><rect x="8" y="5" width="8" height="1" fill="#000000"/><rect x="1" y="6" width="2" height="1" fill="#000080"/><rect x="5" y="6" width="1" height="1" fill="#000080"/><rect x="1" y="7" width="2" height="1" fill="#000080"/><rect x="5" y="7" width="2" height="1" fill="#000080"/><rect x="10" y="7" width="6" height="1" fill="#000000"/><rect x="1" y="8" width="7" height="1" fill="#000080"/><rect x="5" y="9" width="2" height="1" fill="#000080"/><rect x="10" y="9" width="6" height="1" fill="#000000"/><rect x="5" y="10" width="1" height="1" fill="#000080"/><rect x="10" y="11" width="6" height="1" fill="#000000"/><rect x="8" y="13" width="8" height="1" fill="#000000"/></svg><svg style="position:absolute;left:417px;top:48px" width="16" height="16" shape-rendering="crispEdges"><rect x="1" y="1" width="7" height="1" fill="#000080"/><rect x="1" y="2" width="2" height="1" fill="#000080"/><rect x="1" y="3" width="2" height="1" fill="#000080"/><rect x="8" y="3" width="8" height="1" fill="#000000"/><rect x="1" y="4" width="2" height="1" fill="#000080"/><rect x="1" y="5" width="2" height="1" fill="#000080"/><rect x="10" y="5" width="6" height="1" fill="#000000"/><rect x="1" y="6" width="2" height="1" fill="#000080"/><rect x="1" y="7" width="2" height="1" fill="#000080"/><rect x="10" y="7" width="6" height="1" fill="#000000"/><rect x="1" y="8" width="2" height="1" fill="#000080"/><rect x="1" y="9" width="2" height="1" fill="#000080"/><rect x="10" y="9" width="6" height="1" fill="#000000"/><rect x="1" y="10" width="2" height="1" fill="#000080"/><rect x="5" y="10" width="1" height="1" fill="#000080"/><rect x="1" y="11" width="2" height="1" fill="#000080"/><rect x="5" y="11" width="2" height="1" fill="#000080"/><rect x="8" y="11" width="8" height="1" fill="#000000"/><rect x="1" y="12" width="7" height="1" fill="#000080"/><rect x="5" y="13" width="2" height="1" fill="#000080"/><rect x="5" y="14" width="1" height="1" fill="#000080"/></svg><svg style="position:absolute;left:441px;top:48px" width="16" height="16" shape-rendering="crispEdges"><rect x="4" y="1" width="1" height="1" fill="#000080"/><rect x="4" y="2" width="2" height="1" fill="#000080"/><rect x="4" y="3" width="3" height="1" fill="#000080"/><rect x="1" y="4" width="7" height="1" fill="#000080"/><rect x="1" y="5" width="2" height="1" fill="#000080"/><rect x="4" y="5" width="2" height="1" fill="#000080"/><rect x="8" y="5" width="8" height="1" fill="#000000"/><rect x="1" y="6" width="2" height="1" fill="#000080"/><rect x="4" y="6" width="1" height="1" fill="#000080"/><rect x="1" y="7" width="2" height="1" fill="#000080"/><rect x="10" y="7" width="6" height="1" fill="#000000"/><rect x="1" y="8" width="9" height="1" fill="#000080"/><rect x="10" y="9" width="6" height="1" fill="#000000"/><rect x="10" y="11" width="6" height="1" fill="#000000"/><rect x="8" y="13" width="8" height="1" fill="#000000"/></svg><svg style="position:absolute;left:473px;top:48px" width="16" height="16" shape-rendering="crispEdges"><rect x="6" y="1" width="2" height="1" fill="#000000"/><rect x="9" y="1" width="2" height="1" fill="#000000"/><rect x="5" y="2" width="1" height="1" fill="#000000"/><rect x="6" y="2" width="2" height="1" fill="#ffffff"/><rect x="8" y="2" width="1" height="1" fill="#000000"/><rect x="9" y="2" width="2" height="1" fill="#ffffff"/><rect x="11" y="2" width="2" height="1" fill="#000000"/><rect x="5" y="3" width="1" height="1" fill="#000000"/><rect x="6" y="3" width="2" height="1" fill="#ffffff"/><rect x="8" y="3" width="1" height="1" fill="#000000"/><rect x="9" y="3" width="2" height="1" fill="#ffffff"/><rect x="11" y="3" width="1" height="1" fill="#000000"/><rect x="12" y="3" width="1" height="1" fill="#ffffff"/><rect x="13" y="3" width="1" height="1" fill="#000000"/><rect x="5" y="4" width="1" height="1" fill="#000000"/><rect x="6" y="4" width="2" height="1" fill="#ffffff"/><rect x="8" y="4" width="1" height="1" fill="#000000"/><rect x="9" y="4" width="2" height="1" fill="#ffffff"/><rect x="11" y="4" width="1" height="1" fill="#000000"/><rect x="12" y="4" width="2" height="1" fill="#ffffff"/><rect x="14" y="4" width="1" height="1" fill="#000000"/><rect x="5" y="5" width="1" height="1" fill="#000000"/><rect x="6" y="5" width="2" height="1" fill="#ffffff"/><rect x="8" y="5" width="1" height="1" fill="#000000"/><rect x="9" y="5" width="2" height="1" fill="#ffffff"/><rect x="11" y="5" width="1" height="1" fill="#000000"/><rect x="12" y="5" width="2" height="1" fill="#ffffff"/><rect x="14" y="5" width="1" height="1" fill="#000000"/><rect x="5" y="6" width="1" height="1" fill="#000000"/><rect x="6" y="6" width="2" height="1" fill="#ffffff"/><rect x="8" y="6" width="1" height="1" fill="#000000"/><rect x="9" y="6" width="2" height="1" fill="#ffffff"/><rect x="11" y="6" width="1" height="1" fill="#000000"/><rect x="12" y="6" width="2" height="1" fill="#ffffff"/><rect x="14" y="6" width="1" height="1" fill="#000000"/><rect x="2" y="7" width="2" height="1" fill="#000000"/><rect x="5" y="7" width="1" height="1" fill="#000000"/><rect x="6" y="7" width="2" height="1" fill="#ffffff"/><rect x="8" y="7" width="1" height="1" fill="#000000"/><rect x="9" y="7" width="2" height="1" fill="#ffffff"/><rect x="11" y="7" width="1" height="1" fill="#000000"/><rect x="12" y="7" width="2" height="1" fill="#ffffff"/><rect x="14" y="7" width="1" height="1" fill="#000000"/><rect x="1" y="8" width="1" height="1" fill="#000000"/><rect x="2" y="8" width="2" height="1" fill="#ffffff"/><rect x="4" y="8" width="2" height="1" fill="#000000"/><rect x="6" y="8" width="8" height="1" fill="#ffffff"/><rect x="14" y="8" width="1" height="1" fill="#000000"/><rect x="1" y="9" width="1" height="1" fill="#000000"/><rect x="2" y="9" width="3" height="1" fill="#ffffff"/><rect x="5" y="9" width="1" height="1" fill="#000000"/><rect x="6" y="9" width="8" height="1" fill="#ffffff"/><rect x="14" y="9" width="1" height="1" fill="#000000"/><rect x="2" y="10" width="1" height="1" fill="#000000"/><rect x="3" y="10" width="11" height="1" fill="#ffffff"/><rect x="14" y="10" width="1" height="1" fill="#000000"/><rect x="3" y="11" width="1" height="1" fill="#000000"/><rect x="4" y="11" width="10" height="1" fill="#ffffff"/><rect x="14" y="11" width="1" height="1" fill="#000000"/><rect x="4" y="12" width="1" height="1" fill="#000000"/><rect x="5" y="12" width="8" height="1" fill="#ffffff"/><rect x="13" y="12" width="1" height="1" fill="#000000"/><rect x="4" y="13" width="1" height="1" fill="#000000"/><rect x="5" y="13" width="8" height="1" fill="#ffffff"/><rect x="13" y="13" width="1" height="1" fill="#000000"/><rect x="5" y="14" width="8" height="1" fill="#000080"/></svg><svg style="position:absolute;left:497px;top:48px" width="16" height="16" shape-rendering="crispEdges"><rect x="6" y="1" width="2" height="1" fill="#000000"/><rect x="9" y="1" width="2" height="1" fill="#000000"/><rect x="5" y="2" width="1" height="1" fill="#000000"/><rect x="6" y="2" width="2" height="1" fill="#ffffff"/><rect x="8" y="2" width="1" height="1" fill="#000000"/><rect x="9" y="2" width="2" height="1" fill="#ffffff"/><rect x="11" y="2" width="2" height="1" fill="#000000"/><rect x="5" y="3" width="1" height="1" fill="#000000"/><rect x="6" y="3" width="2" height="1" fill="#ffffff"/><rect x="8" y="3" width="1" height="1" fill="#000000"/><rect x="9" y="3" width="2" height="1" fill="#ffffff"/><rect x="11" y="3" width="1" height="1" fill="#000000"/><rect x="12" y="3" width="1" height="1" fill="#ffffff"/><rect x="13" y="3" width="1" height="1" fill="#000000"/><rect x="5" y="4" width="1" height="1" fill="#000000"/><rect x="6" y="4" width="2" height="1" fill="#ffffff"/><rect x="8" y="4" width="1" height="1" fill="#000000"/><rect x="9" y="4" width="2" height="1" fill="#ffffff"/><rect x="11" y="4" width="1" height="1" fill="#000000"/><rect x="12" y="4" width="2" height="1" fill="#ffffff"/><rect x="14" y="4" width="1" height="1" fill="#000000"/><rect x="5" y="5" width="1" height="1" fill="#000000"/><rect x="6" y="5" width="2" height="1" fill="#ffffff"/><rect x="8" y="5" width="1" height="1" fill="#000000"/><rect x="9" y="5" width="2" height="1" fill="#ffffff"/><rect x="11" y="5" width="1" height="1" fill="#000000"/><rect x="12" y="5" width="2" height="1" fill="#ffffff"/><rect x="14" y="5" width="1" height="1" fill="#000000"/><rect x="5" y="6" width="1" height="1" fill="#000000"/><rect x="6" y="6" width="2" height="1" fill="#ffffff"/><rect x="8" y="6" width="1" height="1" fill="#000000"/><rect x="9" y="6" width="2" height="1" fill="#ffffff"/><rect x="11" y="6" width="1" height="1" fill="#000000"/><rect x="12" y="6" width="2" height="1" fill="#ffffff"/><rect x="14" y="6" width="1" height="1" fill="#000000"/><rect x="2" y="7" width="2" height="1" fill="#000000"/><rect x="5" y="7" width="1" height="1" fill="#000000"/><rect x="6" y="7" width="2" height="1" fill="#ffffff"/><rect x="8" y="7" width="1" height="1" fill="#000000"/><rect x="9" y="7" width="2" height="1" fill="#ffffff"/><rect x="11" y="7" width="1" height="1" fill="#000000"/><rect x="12" y="7" width="2" height="1" fill="#ffffff"/><rect x="14" y="7" width="1" height="1" fill="#000000"/><rect x="1" y="8" width="1" height="1" fill="#000000"/><rect x="2" y="8" width="2" height="1" fill="#ffffff"/><rect x="4" y="8" width="2" height="1" fill="#000000"/><rect x="6" y="8" width="8" height="1" fill="#ffffff"/><rect x="14" y="8" width="1" height="1" fill="#000000"/><rect x="1" y="9" width="1" height="1" fill="#000000"/><rect x="2" y="9" width="3" height="1" fill="#ffffff"/><rect x="5" y="9" width="1" height="1" fill="#000000"/><rect x="6" y="9" width="8" height="1" fill="#ffffff"/><rect x="14" y="9" width="1" height="1" fill="#000000"/><rect x="2" y="10" width="1" height="1" fill="#000000"/><rect x="3" y="10" width="11" height="1" fill="#ffffff"/><rect x="14" y="10" width="1" height="1" fill="#000000"/><rect x="3" y="11" width="1" height="1" fill="#000000"/><rect x="4" y="11" width="10" height="1" fill="#ffffff"/><rect x="14" y="11" width="1" height="1" fill="#000000"/><rect x="4" y="12" width="1" height="1" fill="#000000"/><rect x="5" y="12" width="8" height="1" fill="#ffffff"/><rect x="13" y="12" width="1" height="1" fill="#000000"/><rect x="4" y="13" width="1" height="1" fill="#000000"/><rect x="5" y="13" width="8" height="1" fill="#ffffff"/><rect x="13" y="13" width="1" height="1" fill="#000000"/><rect x="5" y="14" width="8" height="1" fill="#000080"/><path d="M3 14 L13 4" stroke="#800000" stroke-width="2" shape-rendering="auto"/><path d="M4 6 L13 14" stroke="#800000" stroke-width="2" shape-rendering="auto"/></svg><svg style="position:absolute;left:530px;top:48px" width="16" height="16" shape-rendering="crispEdges"><rect x="1" y="1" width="14" height="1" fill="#000080"/><rect x="1" y="2" width="14" height="1" fill="#000080"/><rect x="1" y="3" width="1" height="1" fill="#000000"/><rect x="2" y="3" width="12" height="1" fill="#ffffff"/><rect x="14" y="3" width="1" height="1" fill="#000000"/><rect x="1" y="4" width="1" height="1" fill="#000000"/><rect x="2" y="4" width="1" height="1" fill="#ffffff"/><rect x="3" y="4" width="8" height="1" fill="#000000"/><rect x="11" y="4" width="3" height="1" fill="#ffffff"/><rect x="14" y="4" width="1" height="1" fill="#000000"/><rect x="1" y="5" width="1" height="1" fill="#000000"/><rect x="2" y="5" width="1" height="1" fill="#ffffff"/><rect x="3" y="5" width="1" height="1" fill="#000000"/><rect x="4" y="5" width="6" height="1" fill="#ffffff"/><rect x="10" y="5" width="1" height="1" fill="#000000"/><rect x="11" y="5" width="3" height="1" fill="#ffffff"/><rect x="14" y="5" width="1" height="1" fill="#000000"/><rect x="1" y="6" width="1" height="1" fill="#000000"/><rect x="2" y="6" width="1" height="1" fill="#ffffff"/><rect x="3" y="6" width="1" height="1" fill="#000000"/><rect x="4" y="6" width="1" height="1" fill="#ffffff"/><rect x="5" y="6" width="7" height="1" fill="#000000"/><rect x="12" y="6" width="2" height="1" fill="#ffffff"/><rect x="14" y="6" width="1" height="1" fill="#000000"/><rect x="1" y="7" width="1" height="1" fill="#000000"/><rect x="2" y="7" width="1" height="1" fill="#ffffff"/><rect x="3" y="7" width="1" height="1" fill="#000000"/><rect x="4" y="7" width="1" height="1" fill="#ffffff"/><rect x="5" y="7" width="1" height="1" fill="#000000"/><rect x="6" y="7" width="5" height="1" fill="#ffffff"/><rect x="11" y="7" width="1" height="1" fill="#000000"/><rect x="12" y="7" width="2" height="1" fill="#ffffff"/><rect x="14" y="7" width="1" height="1" fill="#000000"/><rect x="0" y="8" width="6" height="1" fill="#000000"/><rect x="6" y="8" width="5" height="1" fill="#ffffff"/><rect x="11" y="8" width="1" height="1" fill="#000000"/><rect x="12" y="8" width="2" height="1" fill="#ffffff"/><rect x="14" y="8" width="1" height="1" fill="#000000"/><rect x="0" y="9" width="1" height="1" fill="#000000"/><rect x="1" y="9" width="4" height="1" fill="#ffffff"/><rect x="5" y="9" width="1" height="1" fill="#000000"/><rect x="6" y="9" width="5" height="1" fill="#ffffff"/><rect x="11" y="9" width="1" height="1" fill="#000000"/><rect x="12" y="9" width="2" height="1" fill="#ffffff"/><rect x="14" y="9" width="1" height="1" fill="#000000"/><rect x="0" y="10" width="1" height="1" fill="#000000"/><rect x="1" y="10" width="1" height="1" fill="#ffffff"/><rect x="2" y="10" width="2" height="1" fill="#000080"/><rect x="4" y="10" width="1" height="1" fill="#ffffff"/><rect x="5" y="10" width="1" height="1" fill="#000000"/><rect x="6" y="10" width="5" height="1" fill="#ffffff"/><rect x="11" y="10" width="1" height="1" fill="#000000"/><rect x="12" y="10" width="2" height="1" fill="#ffffff"/><rect x="14" y="10" width="1" height="1" fill="#000000"/><rect x="0" y="11" width="1" height="1" fill="#000000"/><rect x="1" y="11" width="4" height="1" fill="#ffffff"/><rect x="5" y="11" width="1" height="1" fill="#000000"/><rect x="6" y="11" width="5" height="1" fill="#ffffff"/><rect x="11" y="11" width="1" height="1" fill="#000000"/><rect x="12" y="11" width="2" height="1" fill="#ffffff"/><rect x="14" y="11" width="1" height="1" fill="#000000"/><rect x="0" y="12" width="1" height="1" fill="#000000"/><rect x="1" y="12" width="1" height="1" fill="#ffffff"/><rect x="2" y="12" width="2" height="1" fill="#000080"/><rect x="4" y="12" width="1" height="1" fill="#ffffff"/><rect x="5" y="12" width="10" height="1" fill="#000000"/><rect x="0" y="13" width="1" height="1" fill="#000000"/><rect x="1" y="13" width="4" height="1" fill="#ffffff"/><rect x="5" y="13" width="1" height="1" fill="#000000"/><rect x="0" y="14" width="1" height="1" fill="#000000"/><rect x="1" y="14" width="1" height="1" fill="#ffffff"/><rect x="2" y="14" width="2" height="1" fill="#000080"/><rect x="4" y="14" width="1" height="1" fill="#ffffff"/><rect x="5" y="14" width="1" height="1" fill="#000000"/><rect x="0" y="15" width="6" height="1" fill="#000000"/></svg><svg style="position:absolute;left:553px;top:48px" width="16" height="16" shape-rendering="crispEdges"><rect x="1" y="1" width="6" height="1" fill="#000000"/><rect x="1" y="2" width="1" height="1" fill="#000000"/><rect x="2" y="2" width="4" height="1" fill="#ffffff"/><rect x="6" y="2" width="1" height="1" fill="#000000"/><rect x="1" y="3" width="1" height="1" fill="#000000"/><rect x="2" y="3" width="4" height="1" fill="#ffffff"/><rect x="6" y="3" width="1" height="1" fill="#000000"/><rect x="1" y="4" width="1" height="1" fill="#000000"/><rect x="2" y="4" width="2" height="1" fill="#ffffff"/><rect x="4" y="4" width="6" height="1" fill="#000000"/><rect x="1" y="5" width="4" height="1" fill="#000000"/><rect x="5" y="5" width="4" height="1" fill="#ffffff"/><rect x="9" y="5" width="1" height="1" fill="#000000"/><rect x="4" y="6" width="1" height="1" fill="#000000"/><rect x="5" y="6" width="4" height="1" fill="#ffffff"/><rect x="9" y="6" width="1" height="1" fill="#000000"/><rect x="1" y="7" width="1" height="1" fill="#000080"/><rect x="4" y="7" width="1" height="1" fill="#000000"/><rect x="5" y="7" width="2" height="1" fill="#ffffff"/><rect x="7" y="7" width="6" height="1" fill="#000000"/><rect x="2" y="8" width="1" height="1" fill="#000080"/><rect x="4" y="8" width="4" height="1" fill="#000000"/><rect x="8" y="8" width="4" height="1" fill="#ffffff"/><rect x="12" y="8" width="1" height="1" fill="#000000"/><rect x="3" y="9" width="1" height="1" fill="#000080"/><rect x="7" y="9" width="1" height="1" fill="#000000"/><rect x="8" y="9" width="4" height="1" fill="#ffffff"/><rect x="12" y="9" width="1" height="1" fill="#000000"/><rect x="4" y="10" width="1" height="1" fill="#000080"/><rect x="7" y="10" width="1" height="1" fill="#000000"/><rect x="8" y="10" width="2" height="1" fill="#ffffff"/><rect x="10" y="10" width="6" height="1" fill="#000000"/><rect x="5" y="11" width="1" height="1" fill="#000080"/><rect x="7" y="11" width="4" height="1" fill="#000000"/><rect x="11" y="11" width="4" height="1" fill="#ffffff"/><rect x="15" y="11" width="1" height="1" fill="#000000"/><rect x="6" y="12" width="2" height="1" fill="#000080"/><rect x="10" y="12" width="1" height="1" fill="#000000"/><rect x="11" y="12" width="4" height="1" fill="#ffffff"/><rect x="15" y="12" width="1" height="1" fill="#000000"/><rect x="7" y="13" width="2" height="1" fill="#000080"/><rect x="10" y="13" width="1" height="1" fill="#000000"/><rect x="11" y="13" width="4" height="1" fill="#ffffff"/><rect x="15" y="13" width="1" height="1" fill="#000000"/><rect x="5" y="14" width="4" height="1" fill="#000080"/><rect x="10" y="14" width="6" height="1" fill="#000000"/></svg><div style="position:absolute;left:572px;top:46px;width:24px;height:22px;background:#ebe9e5;box-shadow: inset 1px 1px 0 #808080, inset -1px -1px 0 #ffffff;"></div><svg style="position:absolute;left:579px;top:48px" width="16" height="16" shape-rendering="crispEdges"><rect x="1" y="2" width="14" height="1" fill="#000080"/><rect x="1" y="3" width="1" height="1" fill="#000000"/><rect x="2" y="3" width="12" height="1" fill="#ffffff"/><rect x="14" y="3" width="1" height="1" fill="#000000"/><rect x="0" y="4" width="3" height="1" fill="#000000"/><rect x="3" y="4" width="1" height="1" fill="#ffffff"/><rect x="4" y="4" width="4" height="1" fill="#808080"/><rect x="8" y="4" width="1" height="1" fill="#ffffff"/><rect x="9" y="4" width="2" height="1" fill="#808080"/><rect x="11" y="4" width="3" height="1" fill="#ffffff"/><rect x="14" y="4" width="1" height="1" fill="#000000"/><rect x="0" y="5" width="1" height="1" fill="#000000"/><rect x="1" y="5" width="2" height="1" fill="#ffff00"/><rect x="3" y="5" width="1" height="1" fill="#000000"/><rect x="4" y="5" width="10" height="1" fill="#ffffff"/><rect x="14" y="5" width="1" height="1" fill="#000000"/><rect x="0" y="6" width="1" height="1" fill="#000000"/><rect x="1" y="6" width="2" height="1" fill="#ffff00"/><rect x="3" y="6" width="1" height="1" fill="#000000"/><rect x="4" y="6" width="2" height="1" fill="#808080"/><rect x="6" y="6" width="1" height="1" fill="#ffffff"/><rect x="7" y="6" width="2" height="1" fill="#808080"/><rect x="9" y="6" width="5" height="1" fill="#ffffff"/><rect x="14" y="6" width="1" height="1" fill="#000000"/><rect x="0" y="7" width="1" height="1" fill="#000000"/><rect x="1" y="7" width="2" height="1" fill="#ffff00"/><rect x="3" y="7" width="1" height="1" fill="#000000"/><rect x="4" y="7" width="10" height="1" fill="#ffffff"/><rect x="14" y="7" width="1" height="1" fill="#000000"/><rect x="0" y="8" width="1" height="1" fill="#000000"/><rect x="1" y="8" width="2" height="1" fill="#ffff00"/><rect x="3" y="8" width="1" height="1" fill="#000000"/><rect x="4" y="8" width="2" height="1" fill="#808080"/><rect x="6" y="8" width="1" height="1" fill="#ffffff"/><rect x="7" y="8" width="2" height="1" fill="#808080"/><rect x="9" y="8" width="5" height="1" fill="#ffffff"/><rect x="14" y="8" width="1" height="1" fill="#000000"/><rect x="0" y="9" width="1" height="1" fill="#000000"/><rect x="1" y="9" width="2" height="1" fill="#ffff00"/><rect x="3" y="9" width="1" height="1" fill="#000000"/><rect x="4" y="9" width="10" height="1" fill="#ffffff"/><rect x="14" y="9" width="1" height="1" fill="#000000"/><rect x="0" y="10" width="4" height="1" fill="#000000"/><rect x="4" y="10" width="4" height="1" fill="#808080"/><rect x="8" y="10" width="6" height="1" fill="#ffffff"/><rect x="14" y="10" width="1" height="1" fill="#000000"/><rect x="1" y="11" width="2" height="1" fill="#000000"/><rect x="3" y="11" width="11" height="1" fill="#ffffff"/><rect x="14" y="11" width="1" height="1" fill="#000000"/><rect x="1" y="12" width="14" height="1" fill="#000000"/><rect x="1" y="13" width="2" height="1" fill="#000000"/><rect x="0" y="14" width="1" height="1" fill="#000000"/><rect x="1" y="14" width="2" height="1" fill="#ffff00"/><rect x="3" y="14" width="1" height="1" fill="#000000"/><rect x="1" y="15" width="2" height="1" fill="#000000"/></svg><div style="position:absolute;left:4px;top:72px;width:760px;height:441px;box-shadow: inset 1px 1px 0 #808080, inset -1px -1px 0 #ffffff, inset 2px 2px 0 #404040, inset -2px -2px 0 #d4d0c8;"></div><div style="position:absolute;left:6px;top:74px;width:756px;height:437px;background:#808080;overflow:hidden;"><div style="position:absolute;left:0px;top:-2px;width:624px;height:305px;background:#d4d0c8;box-shadow: inset -1px -1px 0 #404040, inset 1px 1px 0 #d4d0c8, inset -2px -2px 0 #808080, inset 2px 2px 0 #ffffff;"><div style="position:absolute;left:4px;top:4px;width:616px;height:18px;background:linear-gradient(to right,#808080,#c0c0c0);"></div><svg style="position:absolute;left:5px;top:5px" width="16" height="16" shape-rendering="crispEdges"><rect x="3" y="0" width="1" height="1" fill="#000000"/><rect x="5" y="0" width="1" height="1" fill="#000000"/><rect x="7" y="0" width="1" height="1" fill="#000000"/><rect x="2" y="1" width="1" height="1" fill="#000000"/><rect x="3" y="1" width="5" height="1" fill="#ffff00"/><rect x="8" y="1" width="1" height="1" fill="#000000"/><rect x="1" y="2" width="1" height="1" fill="#000000"/><rect x="2" y="2" width="3" height="1" fill="#ffff00"/><rect x="5" y="2" width="2" height="1" fill="#000000"/><rect x="7" y="2" width="2" height="1" fill="#ffff00"/><rect x="9" y="2" width="1" height="1" fill="#000000"/><rect x="2" y="3" width="2" height="1" fill="#ffff00"/><rect x="4" y="3" width="1" height="1" fill="#000000"/><rect x="5" y="3" width="2" height="1" fill="#ffffff"/><rect x="7" y="3" width="1" height="1" fill="#000000"/><rect x="8" y="3" width="2" height="1" fill="#ffff00"/><rect x="1" y="4" width="1" height="1" fill="#000000"/><rect x="2" y="4" width="2" height="1" fill="#ffff00"/><rect x="4" y="4" width="1" height="1" fill="#000000"/><rect x="5" y="4" width="2" height="1" fill="#ffffff"/><rect x="7" y="4" width="1" height="1" fill="#000000"/><rect x="8" y="4" width="8" height="1" fill="#000080"/><rect x="2" y="5" width="3" height="1" fill="#ffff00"/><rect x="5" y="5" width="2" height="1" fill="#000000"/><rect x="7" y="5" width="1" height="1" fill="#ffff00"/><rect x="8" y="5" width="7" height="1" fill="#000080"/><rect x="15" y="5" width="1" height="1" fill="#000000"/><rect x="1" y="6" width="1" height="1" fill="#000000"/><rect x="2" y="6" width="6" height="1" fill="#ffff00"/><rect x="8" y="6" width="7" height="1" fill="#ffffff"/><rect x="15" y="6" width="1" height="1" fill="#000000"/><rect x="3" y="7" width="1" height="1" fill="#000000"/><rect x="4" y="7" width="8" height="1" fill="#000080"/><rect x="12" y="7" width="1" height="1" fill="#000000"/><rect x="13" y="7" width="2" height="1" fill="#ffffff"/><rect x="15" y="7" width="1" height="1" fill="#000000"/><rect x="4" y="8" width="8" height="1" fill="#000080"/><rect x="12" y="8" width="1" height="1" fill="#000000"/><rect x="13" y="8" width="2" height="1" fill="#ffffff"/><rect x="15" y="8" width="1" height="1" fill="#000000"/><rect x="4" y="9" width="8" height="1" fill="#ffffff"/><rect x="12" y="9" width="1" height="1" fill="#000000"/><rect x="13" y="9" width="2" height="1" fill="#ffffff"/><rect x="15" y="9" width="1" height="1" fill="#000000"/><rect x="4" y="10" width="2" height="1" fill="#ffffff"/><rect x="6" y="10" width="4" height="1" fill="#808080"/><rect x="10" y="10" width="2" height="1" fill="#ffffff"/><rect x="12" y="10" width="1" height="1" fill="#000000"/><rect x="13" y="10" width="2" height="1" fill="#ffffff"/><rect x="15" y="10" width="1" height="1" fill="#000000"/><rect x="4" y="11" width="8" height="1" fill="#ffffff"/><rect x="12" y="11" width="4" height="1" fill="#000000"/><rect x="4" y="12" width="2" height="1" fill="#ffffff"/><rect x="6" y="12" width="4" height="1" fill="#808080"/><rect x="10" y="12" width="1" height="1" fill="#ffffff"/><rect x="11" y="12" width="1" height="1" fill="#808080"/><rect x="12" y="12" width="1" height="1" fill="#000000"/><rect x="4" y="13" width="8" height="1" fill="#ffffff"/><rect x="12" y="13" width="1" height="1" fill="#000000"/><rect x="5" y="14" width="8" height="1" fill="#000000"/></svg><div style="position:absolute;left:23px;top:4px;white-space:pre;font-weight:bold;font-size:11px;line-height:18px;color:#d4d0c8;letter-spacing:0.65px;">Read only: file://Z:\Chapter 10\Code\debug_timestable2.htm [break]</div><div style="position:absolute;left:568px;top:6px;width:16px;height:14px;background:#d4d0c8;box-shadow: inset -1px -1px 0 #404040, inset 1px 1px 0 #ffffff, inset -2px -2px 0 #808080, inset 2px 2px 0 #d4d0c8;"></div><svg style="position:absolute;left:568px;top:6px" width="16" height="11" shape-rendering="crispEdges"><rect x="4" y="9" width="6" height="1" fill="#000000"/><rect x="4" y="10" width="6" height="1" fill="#000000"/></svg><div style="position:absolute;left:584px;top:6px;width:16px;height:14px;background:#d4d0c8;box-shadow: inset -1px -1px 0 #404040, inset 1px 1px 0 #ffffff, inset -2px -2px 0 #808080, inset 2px 2px 0 #d4d0c8;"></div><svg style="position:absolute;left:584px;top:6px" width="16" height="11" shape-rendering="crispEdges"><rect x="3" y="2" width="9" height="1" fill="#000000"/><rect x="3" y="3" width="9" height="1" fill="#000000"/><rect x="3" y="4" width="1" height="1" fill="#000000"/><rect x="11" y="4" width="1" height="1" fill="#000000"/><rect x="3" y="5" width="1" height="1" fill="#000000"/><rect x="11" y="5" width="1" height="1" fill="#000000"/><rect x="3" y="6" width="1" height="1" fill="#000000"/><rect x="11" y="6" width="1" height="1" fill="#000000"/><rect x="3" y="7" width="1" height="1" fill="#000000"/><rect x="11" y="7" width="1" height="1" fill="#000000"/><rect x="3" y="8" width="1" height="1" fill="#000000"/><rect x="11" y="8" width="1" height="1" fill="#000000"/><rect x="3" y="9" width="1" height="1" fill="#000000"/><rect x="11" y="9" width="1" height="1" fill="#000000"/><rect x="3" y="10" width="9" height="1" fill="#000000"/></svg><div style="position:absolute;left:602px;top:6px;width:16px;height:14px;background:#d4d0c8;box-shadow: inset -1px -1px 0 #404040, inset 1px 1px 0 #ffffff, inset -2px -2px 0 #808080, inset 2px 2px 0 #d4d0c8;"></div><svg style="position:absolute;left:602px;top:6px" width="16" height="10" shape-rendering="crispEdges"><rect x="4" y="3" width="2" height="1" fill="#000000"/><rect x="10" y="3" width="2" height="1" fill="#000000"/><rect x="5" y="4" width="2" height="1" fill="#000000"/><rect x="9" y="4" width="2" height="1" fill="#000000"/><rect x="6" y="5" width="4" height="1" fill="#000000"/><rect x="7" y="6" width="2" height="1" fill="#000000"/><rect x="6" y="7" width="4" height="1" fill="#000000"/><rect x="5" y="8" width="2" height="1" fill="#000000"/><rect x="9" y="8" width="2" height="1" fill="#000000"/><rect x="4" y="9" width="2" height="1" fill="#000000"/><rect x="10" y="9" width="2" height="1" fill="#000000"/></svg><div style="position:absolute;left:4px;top:23px;width:616px;height:278px;box-shadow: inset 1px 1px 0 #808080, inset -1px -1px 0 #ffffff, inset 2px 2px 0 #404040, inset -2px -2px 0 #d4d0c8;"></div><div style="position:absolute;left:6px;top:25px;width:612px;height:274px;background:#fff;overflow:hidden;"><div style="position:absolute;left:0px;top:0px;width:18px;height:258px;background:#d4d0c8;"></div><div style="position:absolute;left:18px;top:0px;width:1px;height:258px;background:#808080;"></div><div style="position:absolute;left:19px;top:0px;width:1px;height:258px;background:#404040;"></div><div style="position:absolute;left:80px;top:128px;width:216px;height:16px;background:#ffff00;"></div><svg style="position:absolute;left:1px;top:129px" width="16" height="14" shape-rendering="crispEdges"><rect x="7" y="1" width="1" height="1" fill="#000000"/><rect x="7" y="2" width="2" height="1" fill="#000000"/><rect x="7" y="3" width="1" height="1" fill="#000000"/><rect x="8" y="3" width="1" height="1" fill="#ffff00"/><rect x="9" y="3" width="1" height="1" fill="#000000"/><rect x="1" y="4" width="7" height="1" fill="#000000"/><rect x="8" y="4" width="2" height="1" fill="#ffff00"/><rect x="10" y="4" width="1" height="1" fill="#000000"/><rect x="1" y="5" width="1" height="1" fill="#000000"/><rect x="2" y="5" width="9" height="1" fill="#ffff00"/><rect x="11" y="5" width="1" height="1" fill="#000000"/><rect x="1" y="6" width="1" height="1" fill="#000000"/><rect x="2" y="6" width="10" height="1" fill="#ffff00"/><rect x="12" y="6" width="1" height="1" fill="#000000"/><rect x="1" y="7" width="1" height="1" fill="#000000"/><rect x="2" y="7" width="11" height="1" fill="#ffff00"/><rect x="13" y="7" width="1" height="1" fill="#000000"/><rect x="1" y="8" width="1" height="1" fill="#000000"/><rect x="2" y="8" width="10" height="1" fill="#ffff00"/><rect x="12" y="8" width="1" height="1" fill="#000000"/><rect x="1" y="9" width="1" height="1" fill="#000000"/><rect x="2" y="9" width="9" height="1" fill="#ffff00"/><rect x="11" y="9" width="1" height="1" fill="#000000"/><rect x="1" y="10" width="7" height="1" fill="#000000"/><rect x="8" y="10" width="2" height="1" fill="#ffff00"/><rect x="10" y="10" width="1" height="1" fill="#000000"/><rect x="7" y="11" width="1" height="1" fill="#000000"/><rect x="8" y="11" width="1" height="1" fill="#ffff00"/><rect x="9" y="11" width="1" height="1" fill="#000000"/><rect x="7" y="12" width="2" height="1" fill="#000000"/><rect x="7" y="13" width="1" height="1" fill="#000000"/></svg><div class="mono" style="position:absolute;left:32px;top:1px;white-space:pre;"><span style="color:#0000ff">{</span><br><span style="color:#0000ff">   var counter;</span><br><span style="color:#0000ff">   var writeString;</span><br><span style="color:#0000ff">   for (counter </span><span style="color:#000000">=</span><span style="color:#0000ff"> 1; counter </span><span style="color:#000000">&lt;</span><span style="color:#0000ff"> 12; counter</span><span style="color:#000000">++</span><span style="color:#0000ff">)</span><br><span style="color:#0000ff">   {</span><br><span style="color:#0000ff">      writeString </span><span style="color:#000000">=</span><span style="color:#0000ff"> counter </span><span style="color:#000000">+</span><span style="color:#0000ff"> " * " </span><span style="color:#000000">+</span><span style="color:#0000ff"> timesTable </span><span style="color:#000000">+</span><span style="color:#0000ff"> " = ";</span><br><span style="color:#0000ff">      writeString </span><span style="color:#000000">=</span><span style="color:#0000ff"> writeString </span><span style="color:#000000">+</span><span style="color:#0000ff"> (timesTable </span><span style="color:#000000">*</span><span style="color:#0000ff"> counter);</span><br><span style="color:#0000ff">      writeString </span><span style="color:#000000">=</span><span style="color:#0000ff"> writeString </span><span style="color:#000000">+</span><span style="color:#0000ff"> "&lt;</span><span style="color:#800000">BR</span><span style="color:#0000ff">&gt;";</span><br><span style="color:#0000ff">      </span><span style="color:#000">document.write(writeString)</span><span style="color:#0000ff">;</span><br><span style="color:#0000ff">   }</span><br><span style="color:#0000ff">}</span><br><span style="color:#000000">&lt;</span><span style="color:#0000ff">/</span><span style="color:#800000">SCRIPT</span><span style="color:#0000ff">&gt;</span><br><span style="color:#0000ff">&lt;/</span><span style="color:#800000">HEAD</span><span style="color:#0000ff">&gt;</span><br><span style="color:#0000ff">&lt;</span><span style="color:#800000">BODY</span><span style="color:#0000ff">&gt;</span><br><span style="color:#0000ff">&lt;</span><span style="color:#800000">P</span><span style="color:#0000ff">&gt;&lt;</span><span style="color:#800000">SCRIPT</span><span style="color:#0000ff"> </span><span style="color:#ff0000">LANGUAGE</span><span style="color:#0000ff">=JavaScript&gt;</span><br><span style="color:#0000ff">var timesTable;</span></div><div style="position:absolute;left:596px;top:0px;width:16px;height:258px;background:#ece9e4;"></div><div style="position:absolute;left:596px;top:0px;width:16px;height:16px;background:#d4d0c8;box-shadow: inset -1px -1px 0 #404040, inset 1px 1px 0 #d4d0c8, inset -2px -2px 0 #808080, inset 2px 2px 0 #ffffff;"></div><svg style="position:absolute;left:596px;top:0px" width="16" height="10" shape-rendering="crispEdges"><rect x="7" y="6" width="1" height="1" fill="#000000"/><rect x="6" y="7" width="3" height="1" fill="#000000"/><rect x="5" y="8" width="5" height="1" fill="#000000"/><rect x="4" y="9" width="7" height="1" fill="#000000"/></svg><div style="position:absolute;left:596px;top:48px;width:16px;height:129px;background:#d4d0c8;box-shadow: inset -1px -1px 0 #404040, inset 1px 1px 0 #d4d0c8, inset -2px -2px 0 #808080, inset 2px 2px 0 #ffffff;"></div><div style="position:absolute;left:0px;top:258px;width:612px;height:16px;background:#ece9e4;"></div><div style="position:absolute;left:0px;top:258px;width:16px;height:16px;background:#d4d0c8;box-shadow: inset -1px -1px 0 #404040, inset 1px 1px 0 #d4d0c8, inset -2px -2px 0 #808080, inset 2px 2px 0 #ffffff;"></div><svg style="position:absolute;left:-1px;top:258px" width="16" height="11" shape-rendering="crispEdges"><rect x="9" y="4" width="1" height="1" fill="#000000"/><rect x="8" y="5" width="2" height="1" fill="#000000"/><rect x="7" y="6" width="3" height="1" fill="#000000"/><rect x="6" y="7" width="4" height="1" fill="#000000"/><rect x="7" y="8" width="3" height="1" fill="#000000"/><rect x="8" y="9" width="2" height="1" fill="#000000"/><rect x="9" y="10" width="1" height="1" fill="#000000"/></svg><div style="position:absolute;left:16px;top:258px;width:20px;height:16px;background:#d4d0c8;box-shadow: inset -1px -1px 0 #404040, inset 1px 1px 0 #d4d0c8, inset -2px -2px 0 #808080, inset 2px 2px 0 #ffffff;"></div><div style="position:absolute;left:596px;top:258px;width:16px;height:16px;background:#d4d0c8;"></div></div></div><div style="position:absolute;left:443px;top:205px;width:300px;height:200px;background:#d4d0c8;box-shadow: inset -1px -1px 0 #404040, inset 1px 1px 0 #d4d0c8, inset -2px -2px 0 #808080, inset 2px 2px 0 #ffffff;"><div style="position:absolute;left:4px;top:4px;width:292px;height:15px;background:linear-gradient(to right,#0a246a,#a6caf0);"></div><div style="position:absolute;left:5px;top:5px;white-space:pre;font-weight:bold;font-size:11px;line-height:15px;color:#fff;letter-spacing:0.45px;">Command Window</div><div style="position:absolute;left:284px;top:6px;width:10px;height:11px;background:#d4d0c8;box-shadow: inset -1px -1px 0 #404040, inset 1px 1px 0 #ffffff, inset -2px -2px 0 #808080, inset 2px 2px 0 #d4d0c8;"></div><svg style="position:absolute;left:284px;top:6px" width="10" height="7" shape-rendering="crispEdges"><rect x="3" y="2" width="1" height="1" fill="#000000"/><rect x="7" y="2" width="1" height="1" fill="#000000"/><rect x="4" y="3" width="1" height="1" fill="#000000"/><rect x="6" y="3" width="1" height="1" fill="#000000"/><rect x="5" y="4" width="1" height="1" fill="#000000"/><rect x="4" y="5" width="1" height="1" fill="#000000"/><rect x="6" y="5" width="1" height="1" fill="#000000"/><rect x="3" y="6" width="1" height="1" fill="#000000"/><rect x="7" y="6" width="1" height="1" fill="#000000"/></svg><div style="position:absolute;left:4px;top:20px;width:292px;height:176px;box-shadow: inset 1px 1px 0 #808080, inset -1px -1px 0 #ffffff, inset 2px 2px 0 #404040, inset -2px -2px 0 #d4d0c8;"></div><div style="position:absolute;left:6px;top:22px;width:288px;height:172px;background:#d4d0c8;overflow:hidden;"><div style="position:absolute;left:0px;top:0px;width:272px;height:156px;background:#fff;box-shadow: inset 0 0 0 1px #000;"></div><div style="position:absolute;left:2px;top:3px;white-space:pre;font-weight:bold;font-size:13px;line-height:16px;color:#000;letter-spacing:0.5px;">timesTable &lt;= 12<br>true</div><div style="position:absolute;left:27px;top:18px;width:1px;height:16px;background:#000;"></div><div style="position:absolute;left:272px;top:0px;width:16px;height:156px;background:#ece9e4;"></div><div style="position:absolute;left:272px;top:0px;width:16px;height:16px;background:#d4d0c8;box-shadow: inset -1px -1px 0 #404040, inset 1px 1px 0 #d4d0c8, inset -2px -2px 0 #808080, inset 2px 2px 0 #ffffff;"></div><svg style="position:absolute;left:272px;top:0px" width="17" height="11" shape-rendering="crispEdges"><rect x="7" y="6" width="1" height="1" fill="#808080"/><rect x="6" y="7" width="3" height="1" fill="#808080"/><rect x="5" y="8" width="5" height="1" fill="#808080"/><rect x="4" y="9" width="7" height="1" fill="#808080"/><rect x="5" y="10" width="7" height="1" fill="#ffffff"/></svg><div style="position:absolute;left:272px;top:140px;width:16px;height:16px;background:#d4d0c8;box-shadow: inset -1px -1px 0 #404040, inset 1px 1px 0 #d4d0c8, inset -2px -2px 0 #808080, inset 2px 2px 0 #ffffff;"></div><svg style="position:absolute;left:272px;top:140px" width="17" height="11" shape-rendering="crispEdges"><rect x="4" y="6" width="7" height="1" fill="#808080"/><rect x="5" y="7" width="5" height="1" fill="#808080"/><rect x="10" y="7" width="2" height="1" fill="#ffffff"/><rect x="6" y="8" width="3" height="1" fill="#808080"/><rect x="9" y="8" width="2" height="1" fill="#ffffff"/><rect x="7" y="9" width="1" height="1" fill="#808080"/><rect x="8" y="9" width="2" height="1" fill="#ffffff"/><rect x="8" y="10" width="1" height="1" fill="#ffffff"/></svg><div style="position:absolute;left:0px;top:156px;width:272px;height:16px;background:#ece9e4;"></div><div style="position:absolute;left:0px;top:156px;width:16px;height:16px;background:#d4d0c8;box-shadow: inset -1px -1px 0 #404040, inset 1px 1px 0 #d4d0c8, inset -2px -2px 0 #808080, inset 2px 2px 0 #ffffff;"></div><svg style="position:absolute;left:0px;top:156px" width="17" height="12" shape-rendering="crispEdges"><rect x="9" y="4" width="1" height="1" fill="#808080"/><rect x="8" y="5" width="2" height="1" fill="#808080"/><rect x="10" y="5" width="1" height="1" fill="#ffffff"/><rect x="7" y="6" width="3" height="1" fill="#808080"/><rect x="10" y="6" width="1" height="1" fill="#ffffff"/><rect x="6" y="7" width="4" height="1" fill="#808080"/><rect x="10" y="7" width="1" height="1" fill="#ffffff"/><rect x="7" y="8" width="3" height="1" fill="#808080"/><rect x="10" y="8" width="1" height="1" fill="#ffffff"/><rect x="8" y="9" width="2" height="1" fill="#808080"/><rect x="10" y="9" width="1" height="1" fill="#ffffff"/><rect x="9" y="10" width="1" height="1" fill="#808080"/><rect x="10" y="10" width="1" height="1" fill="#ffffff"/><rect x="10" y="11" width="1" height="1" fill="#ffffff"/></svg><div style="position:absolute;left:256px;top:156px;width:16px;height:16px;background:#d4d0c8;box-shadow: inset -1px -1px 0 #404040, inset 1px 1px 0 #d4d0c8, inset -2px -2px 0 #808080, inset 2px 2px 0 #ffffff;"></div><svg style="position:absolute;left:256px;top:156px" width="17" height="12" shape-rendering="crispEdges"><rect x="6" y="4" width="1" height="1" fill="#808080"/><rect x="6" y="5" width="2" height="1" fill="#808080"/><rect x="6" y="6" width="3" height="1" fill="#808080"/><rect x="6" y="7" width="4" height="1" fill="#808080"/><rect x="6" y="8" width="3" height="1" fill="#808080"/><rect x="9" y="8" width="2" height="1" fill="#ffffff"/><rect x="6" y="9" width="2" height="1" fill="#808080"/><rect x="8" y="9" width="2" height="1" fill="#ffffff"/><rect x="6" y="10" width="1" height="1" fill="#808080"/><rect x="7" y="10" width="2" height="1" fill="#ffffff"/><rect x="7" y="11" width="1" height="1" fill="#ffffff"/></svg><svg style="position:absolute;left:272px;top:156px" width="16" height="16" shape-rendering="crispEdges"><rect x="15" y="5" width="1" height="1" fill="#ffffff"/><rect x="14" y="6" width="1" height="1" fill="#ffffff"/><rect x="15" y="6" width="1" height="1" fill="#808080"/><rect x="13" y="7" width="1" height="1" fill="#ffffff"/><rect x="14" y="7" width="2" height="1" fill="#808080"/><rect x="12" y="8" width="1" height="1" fill="#ffffff"/><rect x="13" y="8" width="2" height="1" fill="#808080"/><rect x="11" y="9" width="1" height="1" fill="#ffffff"/><rect x="12" y="9" width="2" height="1" fill="#808080"/><rect x="15" y="9" width="1" height="1" fill="#ffffff"/><rect x="10" y="10" width="1" height="1" fill="#ffffff"/><rect x="11" y="10" width="2" height="1" fill="#808080"/><rect x="14" y="10" width="1" height="1" fill="#ffffff"/><rect x="15" y="10" width="1" height="1" fill="#808080"/><rect x="9" y="11" width="1" height="1" fill="#ffffff"/><rect x="10" y="11" width="2" height="1" fill="#808080"/><rect x="13" y="11" width="1" height="1" fill="#ffffff"/><rect x="14" y="11" width="2" height="1" fill="#808080"/><rect x="8" y="12" width="1" height="1" fill="#ffffff"/><rect x="9" y="12" width="2" height="1" fill="#808080"/><rect x="12" y="12" width="1" height="1" fill="#ffffff"/><rect x="13" y="12" width="2" height="1" fill="#808080"/><rect x="7" y="13" width="1" height="1" fill="#ffffff"/><rect x="8" y="13" width="2" height="1" fill="#808080"/><rect x="11" y="13" width="1" height="1" fill="#ffffff"/><rect x="12" y="13" width="2" height="1" fill="#808080"/><rect x="15" y="13" width="1" height="1" fill="#ffffff"/><rect x="6" y="14" width="1" height="1" fill="#ffffff"/><rect x="7" y="14" width="2" height="1" fill="#808080"/><rect x="10" y="14" width="1" height="1" fill="#ffffff"/><rect x="11" y="14" width="2" height="1" fill="#808080"/><rect x="14" y="14" width="1" height="1" fill="#ffffff"/><rect x="15" y="14" width="1" height="1" fill="#808080"/><rect x="5" y="15" width="1" height="1" fill="#ffffff"/><rect x="6" y="15" width="2" height="1" fill="#808080"/><rect x="9" y="15" width="1" height="1" fill="#ffffff"/><rect x="10" y="15" width="2" height="1" fill="#808080"/><rect x="13" y="15" width="1" height="1" fill="#ffffff"/><rect x="14" y="15" width="2" height="1" fill="#808080"/></svg></div></div></div><div style="position:absolute;left:4px;top:515px;width:350px;height:18px;box-shadow: inset 1px 1px 0 #808080, inset -1px -1px 0 #ffffff;"></div><div style="position:absolute;left:5px;top:515px;white-space:pre;font-size:11px;line-height:18px;color:#000;">Ready</div><div style="position:absolute;left:356px;top:515px;width:408px;height:18px;box-shadow: inset 1px 1px 0 #808080, inset -1px -1px 0 #ffffff;"></div><div style="position:absolute;left:357px;top:515px;white-space:pre;font-size:11px;line-height:18px;color:#000;">Ln 13</div><svg style="position:absolute;left:751px;top:519px" width="12" height="12" shape-rendering="crispEdges"><rect x="11" y="0" width="1" height="1" fill="#ffffff"/><rect x="10" y="1" width="1" height="1" fill="#ffffff"/><rect x="11" y="1" width="1" height="1" fill="#808080"/><rect x="9" y="2" width="1" height="1" fill="#ffffff"/><rect x="10" y="2" width="2" height="1" fill="#808080"/><rect x="8" y="3" width="1" height="1" fill="#ffffff"/><rect x="9" y="3" width="2" height="1" fill="#808080"/><rect x="7" y="4" width="1" height="1" fill="#ffffff"/><rect x="8" y="4" width="2" height="1" fill="#808080"/><rect x="11" y="4" width="1" height="1" fill="#ffffff"/><rect x="6" y="5" width="1" height="1" fill="#ffffff"/><rect x="7" y="5" width="2" height="1" fill="#808080"/><rect x="10" y="5" width="1" height="1" fill="#ffffff"/><rect x="11" y="5" width="1" height="1" fill="#808080"/><rect x="5" y="6" width="1" height="1" fill="#ffffff"/><rect x="6" y="6" width="2" height="1" fill="#808080"/><rect x="9" y="6" width="1" height="1" fill="#ffffff"/><rect x="10" y="6" width="2" height="1" fill="#808080"/><rect x="4" y="7" width="1" height="1" fill="#ffffff"/><rect x="5" y="7" width="2" height="1" fill="#808080"/><rect x="8" y="7" width="1" height="1" fill="#ffffff"/><rect x="9" y="7" width="2" height="1" fill="#808080"/><rect x="3" y="8" width="1" height="1" fill="#ffffff"/><rect x="4" y="8" width="2" height="1" fill="#808080"/><rect x="7" y="8" width="1" height="1" fill="#ffffff"/><rect x="8" y="8" width="2" height="1" fill="#808080"/><rect x="11" y="8" width="1" height="1" fill="#ffffff"/><rect x="2" y="9" width="1" height="1" fill="#ffffff"/><rect x="3" y="9" width="2" height="1" fill="#808080"/><rect x="6" y="9" width="1" height="1" fill="#ffffff"/><rect x="7" y="9" width="2" height="1" fill="#808080"/><rect x="10" y="9" width="1" height="1" fill="#ffffff"/><rect x="11" y="9" width="1" height="1" fill="#808080"/><rect x="1" y="10" width="1" height="1" fill="#ffffff"/><rect x="2" y="10" width="2" height="1" fill="#808080"/><rect x="5" y="10" width="1" height="1" fill="#ffffff"/><rect x="6" y="10" width="2" height="1" fill="#808080"/><rect x="9" y="10" width="1" height="1" fill="#ffffff"/><rect x="10" y="10" width="2" height="1" fill="#808080"/><rect x="0" y="11" width="1" height="1" fill="#ffffff"/><rect x="1" y="11" width="2" height="1" fill="#808080"/><rect x="4" y="11" width="1" height="1" fill="#ffffff"/><rect x="5" y="11" width="2" height="1" fill="#808080"/><rect x="8" y="11" width="1" height="1" fill="#ffffff"/><rect x="9" y="11" width="2" height="1" fill="#808080"/></svg></body></html>
